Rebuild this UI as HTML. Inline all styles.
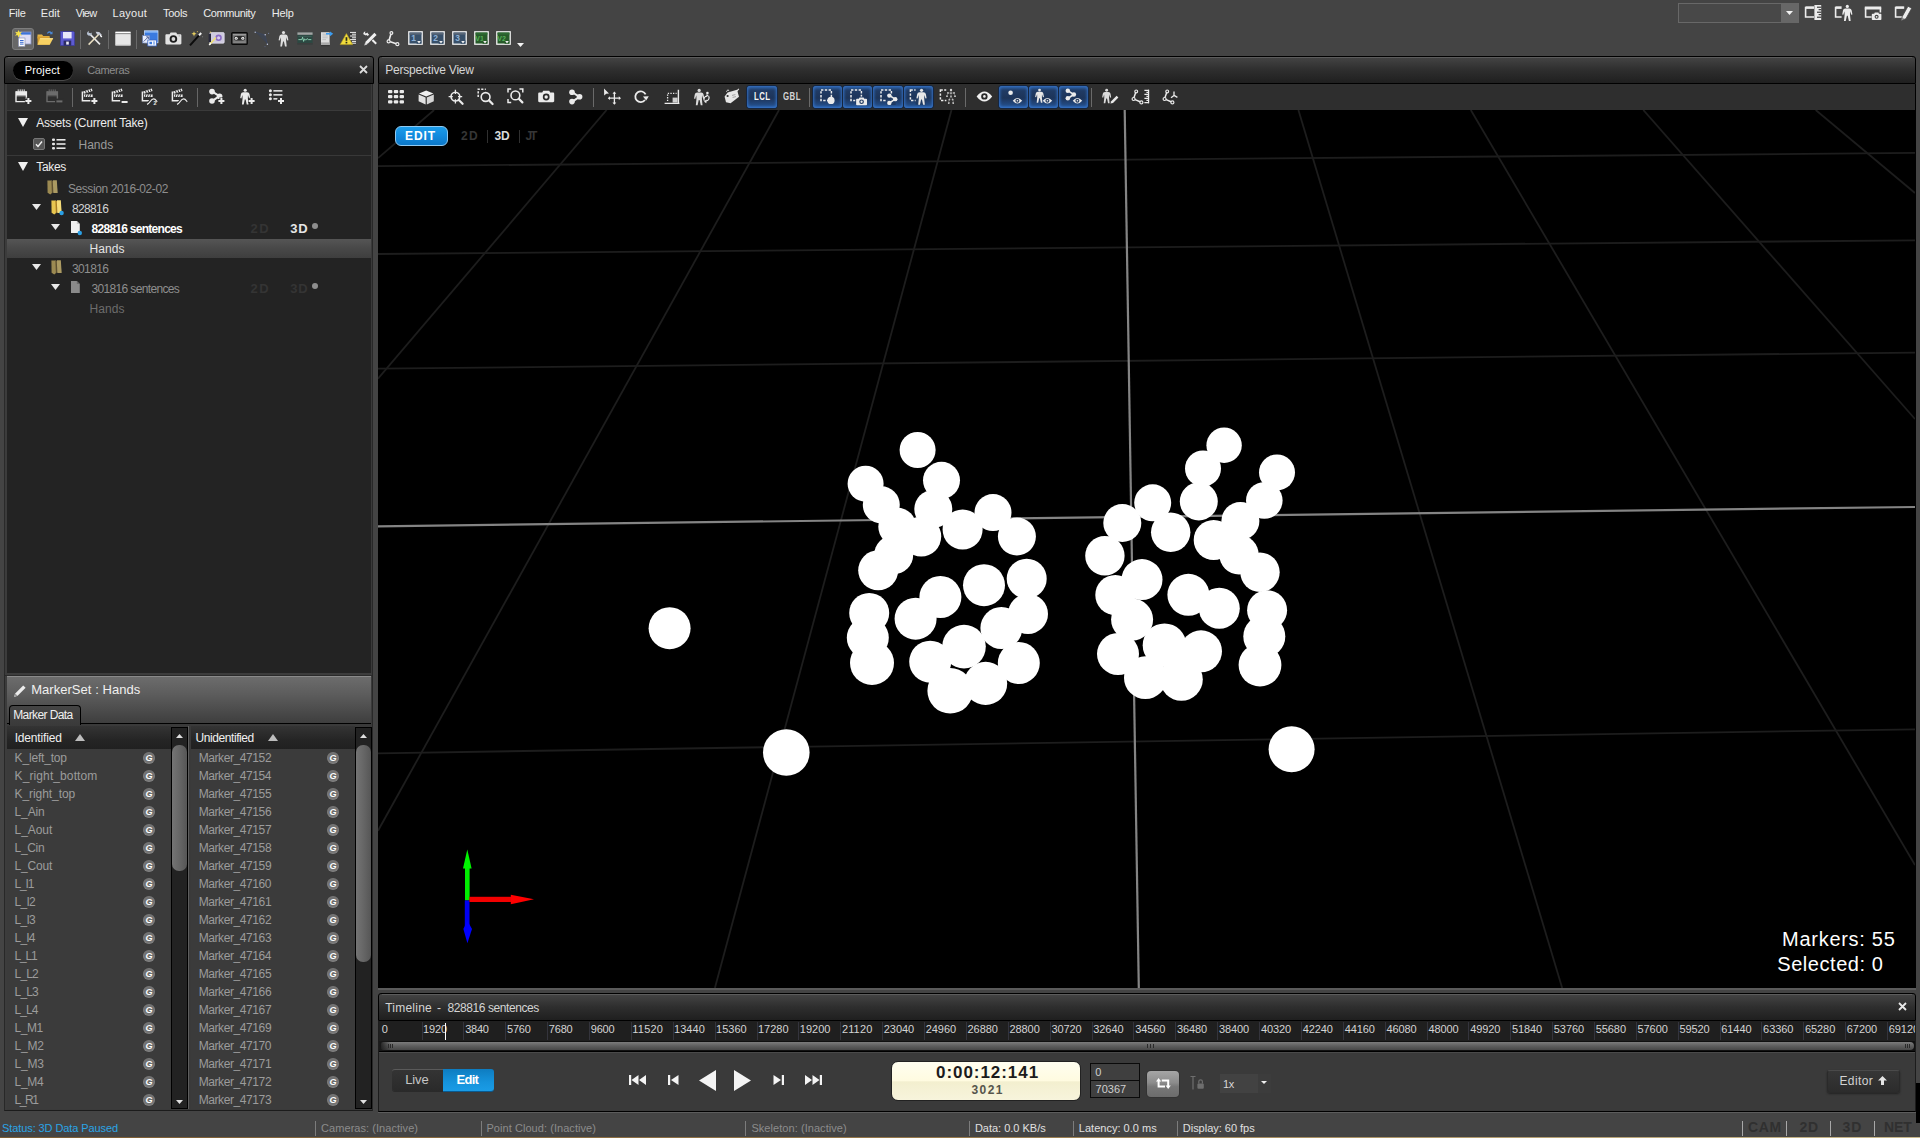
<!DOCTYPE html>
<html>
<head>
<meta charset="utf-8">
<title>Motive</title>
<style>
*{box-sizing:border-box;margin:0;padding:0}
html,body{width:1920px;height:1138px;overflow:hidden;background:#444444}
body{font-family:"Liberation Sans",sans-serif;font-size:12px;color:#e4e4e4;position:relative}
.abs{position:absolute}
.t{position:absolute;white-space:nowrap;line-height:14px}
/* menu */
/* panels */
.phead{position:absolute;height:28px;background:linear-gradient(#444 0,#434343 3%,#2e2e2e 50%,#1f1f1f 100%);border:1px solid #000;border-radius:3px 3px 0 0}
.phead:before{content:"";position:absolute;left:3px;right:3px;top:0;height:1px;background:#5c5c5c}
.vsep{position:absolute;width:1px;background:#6a6a6a}
svg{position:absolute;overflow:visible}
/* lists */
.row{position:absolute;left:0;right:0;height:18px}
.row .n{position:absolute;left:8px;top:2px;font-size:12px;line-height:14px;color:#9a9a9a;white-space:nowrap}
.g{position:absolute;width:12px;height:12px;border-radius:50%;background:radial-gradient(circle at 50% 45%,#6c6c6c 0,#727272 50%,#868686 75%,#6a6a6a 100%)}
.g:after{content:"G";position:absolute;left:0;top:0;width:12px;height:12px;font-size:9px;font-weight:bold;line-height:12px;text-align:center;color:#fff}
</style>
</head>
<body>

<!-- ======= MENU BAR ======= -->
<div id="menubar" class="abs" style="left:0;top:0;width:1920px;height:27px">
  <span class="t" style="left:8.7px;top:3.0px;font-size:11px;line-height:20px;color:#ececec;letter-spacing:-0.22px;">File</span>
  <span class="t" style="left:40.8px;top:3.0px;font-size:11px;line-height:20px;color:#ececec;letter-spacing:0.03px;">Edit</span>
  <span class="t" style="left:75.8px;top:3.0px;font-size:11px;line-height:20px;color:#ececec;letter-spacing:-0.77px;">View</span>
  <span class="t" style="left:112.6px;top:3.0px;font-size:11px;line-height:20px;color:#ececec;letter-spacing:0.25px;">Layout</span>
  <span class="t" style="left:162.9px;top:3.0px;font-size:11px;line-height:20px;color:#ececec;letter-spacing:-0.24px;">Tools</span>
  <span class="t" style="left:203.2px;top:3.0px;font-size:11px;line-height:20px;color:#ececec;letter-spacing:-0.38px;">Community</span>
  <span class="t" style="left:271.8px;top:3.0px;font-size:11px;line-height:20px;color:#ececec;letter-spacing:-0.22px;">Help</span>
</div>

<!-- ======= MAIN TOOLBAR ======= -->
<div id="maintb" class="abs" style="left:0;top:27px;width:700px;height:26px">
<!--MAINTB_S-->
<div class="abs" style="left:12px;top:1px;width:22px;height:22px;border-radius:3px;background:#676767;border:1px solid #7d7d7d"></div>
<svg style="left:15.0px;top:3.0px" width="17" height="17" viewBox="0 0 17 17"><rect x="4" y="2" width="12" height="12" fill="#dcdcf4"/><rect x="4" y="2" width="12" height="2.6" fill="#3c74d8"/><rect x="4" y="2" width="12" height="12" fill="none" stroke="#8a96c8" stroke-width="0.8"/><path d="M3.5 0l1 2.3 2.5-0.6-1.6 2 1.6 2-2.5-0.6-1 2.3-1-2.3-2.5 0.6 1.6-2-1.6-2 2.5 0.6z" fill="#f4e04a"/><rect x="3.5" y="8" width="6.5" height="8.5" fill="#fdfdfd" stroke="#8088a8" stroke-width="0.6"/><path d="M5 10.5h3.6M5 12.3h3.6M5 14.1h3.6" stroke="#3a6ad0" stroke-width="1"/></svg>
<svg style="left:36.0px;top:3.0px" width="18" height="16" viewBox="0 0 18 16"><path d="M11 3.2c1-2 3.2-2.4 4.6-1l0.9-0.9v3h-3l1-1c-0.8-0.8-2-0.6-2.6 0.5z" fill="#4a88d8"/><path d="M1.5 4.5h4.5l1.2 1.6h6.3v2.4h-12z" fill="#e6b546"/><path d="M1.5 6.5h12v8.2h-12z" fill="#d9a030"/><path d="M4.2 8.3h13l-3.4 6.4h-12.3z" fill="#f7d162"/><path d="M4.2 8.3h13l-0.5 1h-13z" fill="#fbe38e"/></svg>
<svg style="left:60.0px;top:4.0px" width="15" height="15" viewBox="0 0 15 15"><path d="M0.5 0.5h13l1 1v13h-14z" fill="#5d5bd0"/><path d="M0.5 0.5h13l1 1v13h-14z" fill="none" stroke="#3d3c9a" stroke-width="0.8"/><rect x="3" y="1" width="8.6" height="6.4" fill="#e8e8fa"/><rect x="3.6" y="9.6" width="7.6" height="5" fill="#2c2c64"/><rect x="6.2" y="10.6" width="2.6" height="3" fill="#eaeaf6"/></svg>
<div class="abs" style="left:80px;top:3px;width:1px;height:19px;background:#6a6a6a"></div>
<svg style="left:86.0px;top:4.0px" width="17" height="15" viewBox="0 0 17 15"><path d="M3.2 2.4L14 13.4" stroke="#e8e8e8" stroke-width="1.6"/><path d="M13.4 2.8L2.6 13.6" stroke="#e9dfc2" stroke-width="1.5"/><path d="M1 2.6c0-1.2 0.8-2.2 2-2.4l-0.4 1.9 1.6 0.7 1.3-1.4c0.6 1.2 0 2.8-1.4 3.2-1.6 0.4-3.1-0.6-3.1-2z" fill="#b9c4d6"/><path d="M9.6 0.8l3.6 0.2 2.6 2.8-1.2 1.3-1.6-1.6-1.8 0.2z" fill="#c8ccd8"/><path d="M14.2 4.2l1.6 1.8" stroke="#fff" stroke-width="1.4"/></svg>
<div class="abs" style="left:108px;top:3px;width:1px;height:19px;background:#6a6a6a"></div>
<svg style="left:115.0px;top:4.0px" width="16" height="15" viewBox="0 0 16 15"><rect x="0.5" y="0.8" width="15" height="13.6" fill="#e4e4e4"/><rect x="0.5" y="0.8" width="15" height="1.6" fill="#fff"/><rect x="0.5" y="2.4" width="15" height="0.9" fill="#555"/><rect x="0.5" y="3.3" width="15" height="11" fill="#e6e6e6"/><rect x="0.5" y="13.6" width="15" height="0.8" fill="#c8c8c8"/></svg>
<div class="abs" style="left:136px;top:3px;width:1px;height:19px;background:#6a6a6a"></div>
<svg style="left:142.0px;top:3.0px" width="17" height="17" viewBox="0 0 17 17"><rect x="2.4" y="0.8" width="13.6" height="12" fill="#3a7ae0"/><rect x="2.4" y="0.8" width="13.6" height="2" fill="#7fb0f4"/><rect x="2.4" y="0.8" width="13.6" height="12" fill="none" stroke="#cfe0fa" stroke-width="0.7"/><rect x="0.6" y="5.6" width="7" height="7.4" fill="#e8eefc" stroke="#6a80b8" stroke-width="0.6"/><path d="M1.6 11.6l4.6-4.6M6.4 9V6.8H4.2" stroke="#4a5a94" stroke-width="0.9" fill="none"/><rect x="5.8" y="10" width="8.6" height="6" fill="#f2f6ff" stroke="#3a66c4" stroke-width="0.8"/><rect x="7.4" y="11.8" width="2.6" height="2.4" fill="#3a7ae0"/><rect x="11.2" y="11.6" width="1.6" height="1" fill="#3a7ae0"/><rect x="11.2" y="13.4" width="1.6" height="1" fill="#3a7ae0"/></svg>
<svg style="left:165.0px;top:4.0px" width="17" height="15" viewBox="0 0 17 15"><path d="M1.6 3.2h3l1-1.8h5.6l1 1.8h3c0.7 0 1.2 0.5 1.2 1.2v7.8c0 0.7-0.5 1.2-1.2 1.2h-13.6c-0.7 0-1.2-0.5-1.2-1.2v-7.8c0-0.7 0.5-1.2 1.2-1.2z" fill="#e2e2e2"/><circle cx="8.4" cy="8" r="3.8" fill="#1c1c1c"/><circle cx="8.4" cy="8" r="1.9" fill="#d8d8d8"/><rect x="13.6" y="4.4" width="1.4" height="1" fill="#aaa"/></svg>
<svg style="left:187.0px;top:3.0px" width="17" height="17" viewBox="0 0 17 17"><path d="M3 15.4L12 5.4" stroke="#0c0c0c" stroke-width="2"/><path d="M12 5.4l2.2-2.4" stroke="#f4f4f4" stroke-width="2"/><path d="M7 1.2l0.7 1.9 1.9 0.7-1.9 0.7-0.7 1.9-0.7-1.9-1.9-0.7 1.9-0.7z" fill="#e8d060"/><circle cx="10.4" cy="1.6" r="0.6" fill="#c8b050"/><circle cx="15.6" cy="6.8" r="0.5" fill="#888"/></svg>
<svg style="left:208.0px;top:4.0px" width="17" height="15" viewBox="0 0 17 15"><rect x="1.6" y="1.6" width="14.6" height="10.6" rx="1" fill="#cfcbdf"/><rect x="1.6" y="1.6" width="14.6" height="10.6" rx="1" fill="none" stroke="#e6e4f0" stroke-width="0.7"/><rect x="0.6" y="2.6" width="2.4" height="8.6" fill="#28283a"/><circle cx="10.6" cy="6.8" r="3.2" fill="#8a6cc4"/><circle cx="10.6" cy="6.8" r="1.6" fill="#d8ccf0"/><path d="M1.6 13.6L8 6.6" stroke="#f0e070" stroke-width="1.5"/><path d="M1.2 14l1.6-1.7" stroke="#fff" stroke-width="1.5"/><path d="M2.4 0.6l0.5 1.2" stroke="#e8d060" stroke-width="1"/></svg>
<svg style="left:231.0px;top:5.0px" width="17" height="13" viewBox="0 0 17 13"><rect x="0.8" y="0.8" width="15.4" height="11.4" rx="0.8" fill="#767676" stroke="#0a0a0a" stroke-width="1.4"/><rect x="2" y="2" width="13" height="1.2" fill="#999"/><rect x="3" y="4" width="11" height="4.4" rx="2" fill="#2a2a2a"/><circle cx="5.2" cy="6.2" r="1.5" fill="#f0f0f0"/><circle cx="11.8" cy="6.2" r="1.5" fill="#f0f0f0"/><circle cx="5.2" cy="6.2" r="0.5" fill="#333"/><circle cx="11.8" cy="6.2" r="0.5" fill="#333"/><rect x="2.4" y="9.6" width="12.2" height="1" fill="#8c8c8c"/></svg>
<svg style="left:253.0px;top:3.0px" width="18" height="18" viewBox="0 0 18 18"><path d="M2 2l10 3 3 9.6z" fill="#38435c" opacity="0.5"/><path d="M2 2l10 3 2.4 9.6" stroke="#3a486a" stroke-width="0.8" fill="none" opacity="0.7"/><circle cx="2.2" cy="2.2" r="0.7" fill="#b8c0d8"/><circle cx="12.2" cy="4.8" r="0.7" fill="#d0d4e8"/><circle cx="14.4" cy="14.2" r="0.7" fill="#c8cce0"/><circle cx="15.6" cy="3.4" r="0.6" fill="#6a7490"/><circle cx="12" cy="16.6" r="0.6" fill="#56607c"/></svg>
<svg style="left:277.5px;top:4.0px" width="11" height="16" viewBox="0 0 11 16"><g fill="#dedede"><circle cx="5.5" cy="1.6" r="1.55"/><path d="M3.6 3.5h3.8q2 0.1 2.3 1.9l0.7 3.9-1.1 0.3-1.1-3.4-0.1 3.6 0.6 5.8h-1.7l-1.1-5h-0.8l-1.1 5h-1.7l0.6-5.8-0.1-3.6-1.1 3.4-1.1-0.3 0.7-3.9q0.3-1.8 2.3-1.9z"/></g></svg>
<svg style="left:297.0px;top:5.0px" width="16" height="13" viewBox="0 0 16 13"><rect x="0.4" y="0.4" width="15.2" height="12" fill="#2c4842"/><rect x="0.4" y="0.4" width="15.2" height="2.4" fill="#a4a4a4"/><rect x="0.4" y="11" width="15.2" height="1.4" fill="#3c3c3c"/><path d="M1.4 7.6h3.4l0.8-2.4 1 4.2 0.9-2.6 1.2 1.4 1.4-1.6 1.4 1h2.8" stroke="#8fd8b8" stroke-width="0.9" fill="none"/><path d="M1.4 4.4h13.2" stroke="#456a62" stroke-width="0.6"/></svg>
<svg style="left:320.0px;top:4.0px" width="15" height="16" viewBox="0 0 15 16"><path d="M1 1.2h8.6v12.8h-8.6z" fill="#dedede"/><path d="M1 11.4h8.6v2.6h-8.6z" fill="#aaa"/><path d="M2.4 3.2h5.4M2.4 5h5.4M2.4 6.8h5.4M2.4 8.6h3.6" stroke="#bcbcbc" stroke-width="0.9"/><path d="M6 2.8h4.6" stroke="#3c9cf0" stroke-width="1.6"/><path d="M10 0.4l3.2 2.4-3.2 2.4z" fill="#3c9cf0"/><rect x="1" y="14.2" width="8.6" height="1" fill="#333"/></svg>
<svg style="left:340.0px;top:4.0px" width="17" height="15" viewBox="0 0 17 15"><rect x="9" y="0.6" width="7" height="13" fill="#3c3c3c"/><path d="M10 1.4h6M12 3.2h4M10 5h6M12 6.8h4M10 8.6h6M12 10.4h4M10 12.2h6" stroke="#f2f2f2" stroke-width="1"/><path d="M6.4 2.6l6.2 11h-12.4z" fill="#f0dc3c"/><path d="M6.4 2.6l6.2 11h-12.4z" fill="none" stroke="#b8a020" stroke-width="0.6"/><rect x="5.6" y="6.2" width="1.7" height="3.6" fill="#2a2a1a"/><rect x="5.6" y="10.8" width="1.7" height="1.6" fill="#2a2a1a"/></svg>
<svg style="left:362.0px;top:4.0px" width="17" height="16" viewBox="0 0 17 16"><path d="M3 13.4l0.8-3 8.6-8.6 2.2 2.2-8.6 8.6z" fill="#f0f0f0"/><path d="M2.2 14.4l1-3.2 2.2 2.2z" fill="#d0d0d0"/><path d="M6.4 4.4l-2-2" stroke="#eee" stroke-width="2"/><path d="M1.4 3.2c-0.4-1.4 0.6-2.6 2-2.8l-0.4 1.6 1.2 0.8 1.3-1.2c0.4 1.2-0.2 2.6-1.6 3z" fill="#eee"/><path d="M10.4 9l3.8 3.8" stroke="#eee" stroke-width="2"/></svg>
<svg style="left:386.0px;top:4.0px" width="15" height="16" viewBox="0 0 15 16"><path d="M5 2.8L3 9.4M3.6 10.6l6.6 2.2" stroke="#ececec" stroke-width="1.6" fill="none"/><circle cx="5.4" cy="2" r="1.4" fill="#444" stroke="#ececec" stroke-width="1.2"/><circle cx="2.6" cy="10.4" r="1.5" fill="#444" stroke="#ececec" stroke-width="1.2"/><circle cx="11.4" cy="13.2" r="1.5" fill="#444" stroke="#ececec" stroke-width="1.2"/></svg>
<svg style="left:408.0px;top:4.0px" width="15" height="15" viewBox="0 0 15 15"><rect x="0.8" y="0.8" width="13.4" height="12.4" fill="#38506a" stroke="#f4f4f4" stroke-width="1.3"/><rect x="1.6" y="1.6" width="11.8" height="2" fill="#5a6878"/><text x="5.6" y="9.8" font-family="Liberation Sans" font-weight="bold" font-size="8.5" fill="#8fb0d6" text-anchor="middle">1</text><rect x="8.6" y="9.4" width="4.8" height="3.4" fill="#38506a"/><path d="M9.2 10l3.6 0-1.8 2.4z" fill="#f0f0f0"/></svg>
<svg style="left:430.0px;top:4.0px" width="15" height="15" viewBox="0 0 15 15"><rect x="0.8" y="0.8" width="13.4" height="12.4" fill="#38506a" stroke="#f4f4f4" stroke-width="1.3"/><rect x="1.6" y="1.6" width="11.8" height="2" fill="#5a6878"/><text x="5.6" y="9.8" font-family="Liberation Sans" font-weight="bold" font-size="8.5" fill="#8fb0d6" text-anchor="middle">2</text><rect x="8.6" y="9.4" width="4.8" height="3.4" fill="#38506a"/><path d="M9.2 10l3.6 0-1.8 2.4z" fill="#f0f0f0"/></svg>
<svg style="left:452.0px;top:4.0px" width="15" height="15" viewBox="0 0 15 15"><rect x="0.8" y="0.8" width="13.4" height="12.4" fill="#38506a" stroke="#f4f4f4" stroke-width="1.3"/><rect x="1.6" y="1.6" width="11.8" height="2" fill="#5a6878"/><text x="5.6" y="9.8" font-family="Liberation Sans" font-weight="bold" font-size="8.5" fill="#8fb0d6" text-anchor="middle">3</text><rect x="8.6" y="9.4" width="4.8" height="3.4" fill="#38506a"/><path d="M9.2 10l3.6 0-1.8 2.4z" fill="#f0f0f0"/></svg>
<svg style="left:474.0px;top:4.0px" width="15" height="15" viewBox="0 0 15 15"><rect x="0.8" y="0.8" width="13.4" height="12.4" fill="#275a2a" stroke="#f4f4f4" stroke-width="1.3"/><rect x="1.6" y="1.6" width="11.8" height="2" fill="#2e6a32"/><text x="5.6" y="9.8" font-family="Liberation Sans" font-weight="bold" font-size="7.0" fill="#58b058" text-anchor="middle">V1</text><rect x="8.6" y="9.4" width="4.8" height="3.4" fill="#275a2a"/><path d="M9.2 10l3.6 0-1.8 2.4z" fill="#f0f0f0"/></svg>
<svg style="left:496.0px;top:4.0px" width="15" height="15" viewBox="0 0 15 15"><rect x="0.8" y="0.8" width="13.4" height="12.4" fill="#275a2a" stroke="#f4f4f4" stroke-width="1.3"/><rect x="1.6" y="1.6" width="11.8" height="2" fill="#2e6a32"/><text x="5.6" y="9.8" font-family="Liberation Sans" font-weight="bold" font-size="7.0" fill="#58b058" text-anchor="middle">V2</text><rect x="8.6" y="9.4" width="4.8" height="3.4" fill="#275a2a"/><path d="M9.2 10l3.6 0-1.8 2.4z" fill="#f0f0f0"/></svg>
<svg style="left:517.0px;top:15.5px" width="7" height="4" viewBox="0 0 7 4"><path d="M0 0h7l-3.5 4z" fill="#f4f4f4"/></svg>
<!--MAINTB_E-->
</div>

<!-- ======= TOP RIGHT ======= -->
<div id="topright" class="abs" style="left:1670px;top:0;width:250px;height:27px">
<!--TOPRIGHT_S-->
<div class="abs" style="left:8px;top:3px;width:121px;height:20px;background:#484848;border:1px solid #686868"></div>
<div class="abs" style="left:111px;top:3px;width:17px;height:20px;background:#676767"></div>
<svg style="left:116.0px;top:11.0px" width="7" height="4" viewBox="0 0 7 4"><path d="M0 0h7l-3.5 4z" fill="#f2f2f2"/></svg>
<svg style="left:134.0px;top:4.0px" width="18" height="17" viewBox="0 0 18 17"><path d="M10 3.6h-8.4v9.4h8.4" fill="none" stroke="#ececec" stroke-width="1.6"/><path d="M1.6 3.6h8.4" stroke="#ececec" stroke-width="2.4"/><rect x="10.4" y="1" width="6.8" height="15" fill="#ececec"/><path d="M13 3.2h4.2M14.6 5.7h2.6M13 8.2h4.2M14.6 10.7h2.6M13 13.2h4.2" stroke="#1a1a1a" stroke-width="1"/></svg>
<svg style="left:164.0px;top:4.0px" width="18" height="17" viewBox="0 0 18 17"><path d="M9 3.6h-7.4v9.4h7" fill="none" stroke="#ececec" stroke-width="1.6"/><path d="M1.6 3.6h7.4" stroke="#ececec" stroke-width="2.4"/><rect x="7.6" y="0.6" width="10" height="16.4" fill="#444"/><g transform="translate(7.6,0.8) scale(1.04)" fill="#ececec"><circle cx="5.5" cy="1.6" r="1.55"/><path d="M3.6 3.5h3.8q2 0.1 2.3 1.9l0.7 3.9-1.1 0.3-1.1-3.4-0.1 3.6 0.6 5.8h-1.7l-1.1-5h-0.8l-1.1 5h-1.7l0.6-5.8-0.1-3.6-1.1 3.4-1.1-0.3 0.7-3.9q0.3-1.8 2.3-1.9z"/></g></svg>
<svg style="left:194.0px;top:4.0px" width="18" height="17" viewBox="0 0 18 17"><path d="M1.6 3.6v9.4h6M16.4 3.6v5" fill="none" stroke="#ececec" stroke-width="1.6"/><path d="M0.8 4h16.4" stroke="#ececec" stroke-width="3"/><path d="M8.6 9.8h1.6l0.6-1.2h3.6l0.6 1.2h1.6c0.4 0 0.8 0.4 0.8 0.8v4.6c0 0.4-0.4 0.8-0.8 0.8h-8c-0.4 0-0.8-0.4-0.8-0.8v-4.6c0-0.4 0.4-0.8 0.8-0.8z" fill="#ececec"/><circle cx="12.6" cy="12.8" r="2" fill="#444"/><circle cx="12.6" cy="12.8" r="0.9" fill="#ececec"/></svg>
<svg style="left:224.0px;top:4.0px" width="18" height="17" viewBox="0 0 18 17"><path d="M9.6 3.6h-8v9.4h6.6" fill="none" stroke="#ececec" stroke-width="1.6"/><path d="M1.6 3.6h8.6" stroke="#ececec" stroke-width="2.4"/><path d="M7.4 16.4l0.8-3.8 5.8-10.4 3.7 2.1-5.8 10.4z" fill="#ececec" stroke="#444" stroke-width="0.8"/><path d="M7.4 16.4l0.6-2.9 2.2 1.2z" fill="#8a8a8a"/></svg>
<!--TOPRIGHT_E-->
</div>

<!-- ======= LEFT PANEL : PROJECT ======= -->
<div id="project" class="abs" style="left:4px;top:56px;width:370px;height:618px">
<!--PROJECT_S-->
<div class="phead" style="left:0;top:0;width:370px"></div>
<div class="abs" style="left:9px;top:5px;width:60px;height:19px;border-radius:10px;background:#000;box-shadow:0 1px 0 #4a4a4a"></div>
<span class="t" style="left:20.8px;top:3.8px;font-size:11px;line-height:20px;color:#fff;letter-spacing:0.13px;">Project</span>
<span class="t" style="left:83.2px;top:3.8px;font-size:11px;line-height:20px;color:#8c8c8c;letter-spacing:-0.36px;">Cameras</span>
<svg style="left:355px;top:9px" width="9" height="9" viewBox="0 0 9 9"><path d="M1 1l7 7M8 1l-7 7" stroke="#dcdcdc" stroke-width="1.8"/></svg>
<div class="abs" style="left:0;top:28px;width:369px;height:26px;background:#2e2e2e"></div>
<div class="abs" style="left:0;top:28px;width:3px;height:590px;background:#3c3c3c;border-left:1px solid #2a2a2a"></div>
<div class="abs" style="left:367px;top:28px;width:2px;height:590px;background:#3a3a3a;border-right:1px solid #282828"></div>
<div id="projtb" class="abs" style="left:0;top:28px;width:370px;height:26px">
<!--PROJTB_S-->
<svg style="left:11.0px;top:5.0px" width="18" height="16" viewBox="0 0 18 16"><path d="M1 2.2h10.4v4h-10.4z" fill="#ebebeb"/><path d="M1 2.2v10.4h10.4V2.2" fill="none" stroke="#ebebeb" stroke-width="1.4"/><path d="M3.2 0.4v2.6M5.2 0.4v2.6M7.2 0.4v2.6M9.2 0.4v2.6" stroke="#ebebeb" stroke-width="1"/><path d="M1 6.8h10.4" stroke="#ebebeb" stroke-width="0.8"/><path d="M9.9 12.0h7M13.4 8.5v7" stroke="#2e2e2e" stroke-width="4" /><path d="M10.4 12.0h6M13.4 9.0v6" stroke="#ebebeb" stroke-width="2"/></svg>
<svg style="left:42.0px;top:5.0px" width="18" height="16" viewBox="0 0 18 16"><path d="M1 2.2h10.4v4h-10.4z" fill="#6c6c6c"/><path d="M1 2.2v10.4h10.4V2.2" fill="none" stroke="#6c6c6c" stroke-width="1.4"/><path d="M3.2 0.4v2.6M5.2 0.4v2.6M7.2 0.4v2.6M9.2 0.4v2.6" stroke="#6c6c6c" stroke-width="1"/><path d="M1 6.8h10.4" stroke="#6c6c6c" stroke-width="0.8"/><rect x="9" y="9.6" width="9" height="5" fill="#2e2e2e"/><path d="M10.4 12.4h6" stroke="#6c6c6c" stroke-width="2"/></svg>
<div class="abs" style="left:68px;top:4px;width:1px;height:19px;background:#666"></div>
<svg style="left:77.0px;top:4.0px" width="18" height="17" viewBox="0 0 18 17"><path d="M1.4 3.6v9.2h8" fill="none" stroke="#ebebeb" stroke-width="1.5"/><path d="M2.2 3.4l8.6-2.8 0.8 2.4-8.6 2.8z" fill="#ebebeb"/><path d="M4.4 2.6l1 2.6M6.8 1.8l1 2.6M9 1.2l1 2.4" stroke="#2e2e2e" stroke-width="1"/><path d="M3 6.4h8.6v2.6h-8.6z" fill="#ebebeb"/><path d="M5 6.2l-1 3M7.4 6.2l-1 3M9.8 6.2l-1 3" stroke="#2e2e2e" stroke-width="0.9"/><path d="M9.9 13.0h7M13.4 9.5v7" stroke="#2e2e2e" stroke-width="4" /><path d="M10.4 13.0h6M13.4 10.0v6" stroke="#ebebeb" stroke-width="2"/></svg>
<svg style="left:107.0px;top:4.0px" width="18" height="17" viewBox="0 0 18 17"><path d="M1.4 3.6v9.2h8" fill="none" stroke="#ebebeb" stroke-width="1.5"/><path d="M2.2 3.4l8.6-2.8 0.8 2.4-8.6 2.8z" fill="#ebebeb"/><path d="M4.4 2.6l1 2.6M6.8 1.8l1 2.6M9 1.2l1 2.4" stroke="#2e2e2e" stroke-width="1"/><path d="M3 6.4h8.6v2.6h-8.6z" fill="#ebebeb"/><path d="M5 6.2l-1 3M7.4 6.2l-1 3M9.8 6.2l-1 3" stroke="#2e2e2e" stroke-width="0.9"/><rect x="9.4" y="11" width="8" height="5" fill="#2e2e2e"/><path d="M10.6 14.0h6" stroke="#ebebeb" stroke-width="2"/></svg>
<svg style="left:137.0px;top:4.0px" width="19" height="17" viewBox="0 0 19 17"><path d="M1.4 3.6v9.2h8" fill="none" stroke="#ebebeb" stroke-width="1.5"/><path d="M2.2 3.4l8.6-2.8 0.8 2.4-8.6 2.8z" fill="#ebebeb"/><path d="M4.4 2.6l1 2.6M6.8 1.8l1 2.6M9 1.2l1 2.4" stroke="#2e2e2e" stroke-width="1"/><path d="M3 6.4h8.6v2.6h-8.6z" fill="#ebebeb"/><path d="M5 6.2l-1 3M7.4 6.2l-1 3M9.8 6.2l-1 3" stroke="#2e2e2e" stroke-width="0.9"/><path d="M6 16.4c3-0.6 3.6-5.6 6.6-5.6 1.8 0 2.4 1.4 3.6 3" fill="none" stroke="#2e2e2e" stroke-width="3.4"/><path d="M6 16.4c3-0.6 3.6-5.6 6.6-5.6 1.8 0 2.4 1.4 3.6 3" fill="none" stroke="#ebebeb" stroke-width="1.2"/><text x="12.6" y="17" font-family="Liberation Sans" font-size="5.5" font-weight="bold" fill="#ebebeb">2</text></svg>
<svg style="left:167.0px;top:4.0px" width="19" height="17" viewBox="0 0 19 17"><path d="M1.4 3.6v9.2h8" fill="none" stroke="#ebebeb" stroke-width="1.5"/><path d="M2.2 3.4l8.6-2.8 0.8 2.4-8.6 2.8z" fill="#ebebeb"/><path d="M4.4 2.6l1 2.6M6.8 1.8l1 2.6M9 1.2l1 2.4" stroke="#2e2e2e" stroke-width="1"/><path d="M3 6.4h8.6v2.6h-8.6z" fill="#ebebeb"/><path d="M5 6.2l-1 3M7.4 6.2l-1 3M9.8 6.2l-1 3" stroke="#2e2e2e" stroke-width="0.9"/><path d="M6 16.4c3-0.6 3.6-5.6 6.6-5.6 1.8 0 2.4 1.4 3.6 3" fill="none" stroke="#2e2e2e" stroke-width="3.4"/><path d="M6 16.4c3-0.6 3.6-5.6 6.6-5.6 1.8 0 2.4 1.4 3.6 3" fill="none" stroke="#ebebeb" stroke-width="1.2"/></svg>
<div class="abs" style="left:193px;top:4px;width:1px;height:19px;background:#666"></div>
<svg style="left:204.0px;top:4.0px" width="18" height="17" viewBox="0 0 18 17"><g transform="translate(1.0,0.8) scale(1.00)"><path d="M3 2.6L10.4 7.4M3 12.4L10.4 7.4" stroke="#ebebeb" stroke-width="2"/><circle cx="3" cy="2.8" r="2.8" fill="#ebebeb"/><circle cx="10.6" cy="7.4" r="2.8" fill="#ebebeb"/><circle cx="3" cy="12.2" r="2.8" fill="#ebebeb"/></g><path d="M9.9 13.0h7M13.4 9.5v7" stroke="#2e2e2e" stroke-width="4" /><path d="M10.4 13.0h6M13.4 10.0v6" stroke="#ebebeb" stroke-width="2"/></svg>
<svg style="left:235.0px;top:4.0px" width="18" height="17" viewBox="0 0 18 17"><g transform="translate(0.6,0.6) scale(1.02)" fill="#ebebeb"><circle cx="5.5" cy="1.6" r="1.55"/><path d="M3.6 3.5h3.8q2 0.1 2.3 1.9l0.7 3.9-1.1 0.3-1.1-3.4-0.1 3.6 0.6 5.8h-1.7l-1.1-5h-0.8l-1.1 5h-1.7l0.6-5.8-0.1-3.6-1.1 3.4-1.1-0.3 0.7-3.9q0.3-1.8 2.3-1.9z"/></g><path d="M9.1 13.0h7M12.6 9.5v7" stroke="#2e2e2e" stroke-width="4" /><path d="M9.6 13.0h6M12.6 10.0v6" stroke="#ebebeb" stroke-width="2"/></svg>
<svg style="left:264.0px;top:5.0px" width="18" height="16" viewBox="0 0 18 16"><g fill="#ebebeb"><circle cx="2.4" cy="1.8" r="1.5"/><circle cx="2.4" cy="5.8" r="1.5"/><circle cx="2.4" cy="9.8" r="1.5"/><rect x="5.4" y="1.1" width="9" height="1.5"/><rect x="5.4" y="5.1" width="9" height="1.5"/><rect x="5.4" y="9.1" width="4" height="1.5"/></g><path d="M9.5 12.0h7M13.0 8.5v7" stroke="#2e2e2e" stroke-width="4" /><path d="M10.0 12.0h6M13.0 9.0v6" stroke="#ebebeb" stroke-width="2"/></svg>
<!--PROJTB_E-->
</div>
<div class="abs" style="left:3px;top:54px;width:364px;height:563px;background:#232323"></div>
<div class="abs" style="left:3px;top:54px;width:364px;height:1px;background:#3a3a3a"></div>
<div class="abs" style="left:3px;top:99px;width:364px;height:1px;background:#383838"></div>
<svg style="left:14.0px;top:61.5px" width="10" height="9" viewBox="0 0 10 9"><path d="M0 0h10 l-5.0 9 z" fill="#f0f0f0"/></svg>
<span class="t" style="left:32.2px;top:56.8px;font-size:12px;line-height:20px;color:#ececec;letter-spacing:-0.21px;">Assets (Current Take)</span>
<div class="abs" style="left:29px;top:82px;width:12px;height:12px;border-radius:2px;background:#555;border:1px solid #777"></div>
<svg style="left:29px;top:82px" width="12" height="12" viewBox="0 0 12 12"><path d="M3 6.3l2 2.2 4-5" stroke="#f4f4f4" stroke-width="1.4" fill="none"/></svg>
<svg style="left:48px;top:82px" width="14" height="12" viewBox="0 0 14 12"><g fill="#e6e6e6"><rect x="0" y="0.5" width="3" height="2.6" rx="1"/><rect x="0" y="4.7" width="3" height="2.6" rx="1"/><rect x="0" y="8.9" width="3" height="2.6" rx="1"/><rect x="4.5" y="1" width="9" height="1.6"/><rect x="4.5" y="5.2" width="9" height="1.6"/><rect x="4.5" y="9.4" width="9" height="1.6"/></g></svg>
<span class="t" style="left:74.5px;top:79.0px;font-size:12px;line-height:20px;color:#9a9a9a;letter-spacing:-0.01px;">Hands</span>
<svg style="left:14.0px;top:105.5px" width="10" height="9" viewBox="0 0 10 9"><path d="M0 0h10 l-5.0 9 z" fill="#f0f0f0"/></svg>
<span class="t" style="left:32.2px;top:100.9px;font-size:12px;line-height:20px;color:#ececec;letter-spacing:-0.31px;">Takes</span>
<svg style="left:42.8px;top:123.6px" width="14" height="16" viewBox="0 0 14 16"><path d="M0.4 0.5h4.6l0.3 12.3-2 1.8-2.7-1.9z" fill="#9c8a52"/><path d="M4.4 0.9h1.6l0.6 10.4-1.7 2.2z" fill="#5e5030"/><path d="M5.8 0.3h4l0.9 12.6h-4.4z" fill="#ab9a62"/></svg>
<span class="t" style="left:63.9px;top:122.8px;font-size:12px;line-height:20px;color:#8e8e8e;letter-spacing:-0.41px;">Session 2016-02-02</span>
<svg style="left:27.5px;top:147.8px" width="9" height="6" viewBox="0 0 9 6"><path d="M0 0h9 l-4.5 6 z" fill="#e8e8e8"/></svg>
<svg style="left:46.6px;top:143.8px" width="14" height="16" viewBox="0 0 14 16"><path d="M0.4 0.5h4.6l0.3 12.3-2 1.8-2.7-1.9z" fill="#e8c650"/><path d="M4.4 0.9h1.6l0.6 10.4-1.7 2.2z" fill="#a87c22"/><path d="M5.8 0.3h4l0.9 12.6h-4.4z" fill="#f6dc78"/><circle cx="10.6" cy="13" r="2.2" fill="#2a9fe4"/></svg>
<span class="t" style="left:67.9px;top:142.7px;font-size:12px;line-height:20px;color:#d4d4d4;letter-spacing:-0.62px;">828816</span>
<svg style="left:47.4px;top:167.8px" width="9" height="6" viewBox="0 0 9 6"><path d="M0 0h9 l-4.5 6 z" fill="#e8e8e8"/></svg>
<svg style="left:67px;top:165px" width="13" height="15" viewBox="0 0 13 15"><path d="M0 0h5.8l3 3v9h-8.8z" fill="#f0f0f0"/><path d="M5.8 0v3h3z" fill="#c8c8c8"/><circle cx="8.8" cy="12" r="2.2" fill="#2a9fe4"/></svg>
<span class="t" style="left:87.6px;top:162.8px;font-size:12px;line-height:20px;color:#fff;letter-spacing:-0.73px;font-weight:bold;">828816 sentences</span>
<span class="t" style="left:246.6px;top:162.5px;font-size:13px;line-height:20px;color:#343434;letter-spacing:1.35px;font-weight:bold;">2D</span>
<span class="t" style="left:286.3px;top:162.5px;font-size:13px;line-height:20px;color:#e6e6e6;letter-spacing:0.80px;font-weight:bold;">3D</span>
<div class="abs" style="left:308px;top:167px;width:6px;height:6px;border-radius:50%;background:#8e8e8e"></div>
<div class="abs" style="left:3px;top:183px;width:364px;height:19px;background:linear-gradient(#555 0,#484848 50%,#3e3e3e 100%)"></div>
<span class="t" style="left:85.4px;top:182.7px;font-size:12px;line-height:20px;color:#e4e4e4;letter-spacing:0.11px;">Hands</span>
<svg style="left:27.5px;top:207.8px" width="9" height="6" viewBox="0 0 9 6"><path d="M0 0h9 l-4.5 6 z" fill="#e8e8e8"/></svg>
<svg style="left:46.6px;top:203.8px" width="14" height="16" viewBox="0 0 14 16"><path d="M0.4 0.5h4.6l0.3 12.3-2 1.8-2.7-1.9z" fill="#9c8a52"/><path d="M4.4 0.9h1.6l0.6 10.4-1.7 2.2z" fill="#5e5030"/><path d="M5.8 0.3h4l0.9 12.6h-4.4z" fill="#ab9a62"/></svg>
<span class="t" style="left:68.0px;top:202.6px;font-size:12px;line-height:20px;color:#8e8e8e;letter-spacing:-0.63px;">301816</span>
<svg style="left:47.4px;top:227.8px" width="9" height="6" viewBox="0 0 9 6"><path d="M0 0h9 l-4.5 6 z" fill="#e8e8e8"/></svg>
<svg style="left:67px;top:225px" width="13" height="15" viewBox="0 0 13 15"><path d="M0 0h5.8l3 3v9h-8.8z" fill="#8a8a8a"/><path d="M5.8 0v3h3z" fill="#6a6a6a"/></svg>
<span class="t" style="left:87.5px;top:222.8px;font-size:12px;line-height:20px;color:#8e8e8e;letter-spacing:-0.65px;">301816 sentences</span>
<span class="t" style="left:246.6px;top:222.5px;font-size:13px;line-height:20px;color:#343434;letter-spacing:1.35px;font-weight:bold;">2D</span>
<span class="t" style="left:286.3px;top:222.5px;font-size:13px;line-height:20px;color:#343434;letter-spacing:0.80px;font-weight:bold;">3D</span>
<div class="abs" style="left:308px;top:227px;width:6px;height:6px;border-radius:50%;background:#8e8e8e"></div>
<span class="t" style="left:85.4px;top:242.6px;font-size:12px;line-height:20px;color:#6c6c6c;letter-spacing:0.11px;">Hands</span>
<div class="abs" style="left:1px;top:617px;width:367px;height:1px;background:#3c3c3c"></div>
<!--PROJECT_E-->
</div>

<!-- ======= LEFT PANEL : MARKERSET ======= -->
<div id="markerset" class="abs" style="left:4px;top:674px;width:370px;height:437px">
<!--MARKERSET_S-->
<div class="abs" style="left:0;top:0;width:369px;height:437px;background:#3a3a3a;border:1px solid #282828;border-top:none;border-bottom-color:#1c1c1c"></div>
<div class="abs" style="left:1px;top:0;width:367px;height:1px;background:#3c3c3c"></div>
<div class="abs" style="left:1px;top:1px;width:367px;height:1px;background:#2a2a2a"></div>
<div class="abs" style="left:1px;top:2px;width:2px;height:434px;background:#3c3c3c"></div>
<div class="abs" style="left:3px;top:2px;width:364px;height:47px;background:linear-gradient(#8a8a8a 0,#8a8a8a 2.2%,#6c6c6c 2.3%,#5c5c5c 40%,#3e3e3e 100%)"></div>
<svg style="left:9px;top:10px" width="14" height="14" viewBox="0 0 14 14"><path d="M1 13l1.2-3.6 8-8 2.4 2.4-8 8z" fill="#ececec"/><path d="M1 13l1.2-3.6 2.4 2.4z" fill="#9a9a9a"/></svg>
<span class="t" style="left:27.2px;top:6.3px;font-size:13px;line-height:20px;color:#f0f0f0;letter-spacing:0.04px;">MarkerSet : Hands</span>
<div class="abs" style="left:3px;top:49px;width:364px;height:1px;background:#000"></div>
<div class="abs" style="left:5px;top:31px;width:72px;height:20px;border:1px solid #000;border-bottom:none;border-radius:4px 4px 0 0;background:linear-gradient(#454545,#3a3a3a)"></div>
<span class="t" style="left:9.2px;top:31.0px;font-size:12px;line-height:20px;color:#f0f0f0;letter-spacing:-0.60px;">Marker Data</span>
<div class="abs" style="left:3px;top:52px;width:164px;height:383px;overflow:hidden;background:#3b3b3b">
<div class="abs" style="left:0;top:0;width:164px;height:23px;background:linear-gradient(#343434,#252525 60%,#202020)"></div>
<span class="t" style="left:7.7px;top:1.7px;font-size:12px;line-height:20px;color:#f0f0f0;letter-spacing:-0.17px;">Identified</span>
<svg style="left:68px;top:8px" width="10" height="7" viewBox="0 0 10 7"><path d="M0 7h10l-5-7z" fill="#bdbdbd"/></svg>
<span class="t" style="left:7.6px;top:22.4px;font-size:12px;line-height:20px;color:#9c9c9c;letter-spacing:-0.18px;">K_left_top</span>
<i class="g" style="left:136px;top:26px"></i>
<span class="t" style="left:7.6px;top:40.4px;font-size:12px;line-height:20px;color:#9c9c9c;letter-spacing:0.10px;">K_right_bottom</span>
<i class="g" style="left:136px;top:44px"></i>
<span class="t" style="left:7.6px;top:58.4px;font-size:12px;line-height:20px;color:#9c9c9c;letter-spacing:-0.08px;">K_right_top</span>
<i class="g" style="left:136px;top:62px"></i>
<span class="t" style="left:7.6px;top:76.4px;font-size:12px;line-height:20px;color:#9c9c9c;letter-spacing:-0.15px;">L_Ain</span>
<i class="g" style="left:136px;top:80px"></i>
<span class="t" style="left:7.6px;top:94.4px;font-size:12px;line-height:20px;color:#9c9c9c;letter-spacing:-0.07px;">L_Aout</span>
<i class="g" style="left:136px;top:98px"></i>
<span class="t" style="left:7.6px;top:112.4px;font-size:12px;line-height:20px;color:#9c9c9c;letter-spacing:-0.33px;">L_Cin</span>
<i class="g" style="left:136px;top:116px"></i>
<span class="t" style="left:7.6px;top:130.4px;font-size:12px;line-height:20px;color:#9c9c9c;letter-spacing:-0.20px;">L_Cout</span>
<i class="g" style="left:136px;top:134px"></i>
<span class="t" style="left:7.6px;top:148.4px;font-size:12px;line-height:20px;color:#9c9c9c;letter-spacing:-1.17px;">L_I1</span>
<i class="g" style="left:136px;top:152px"></i>
<span class="t" style="left:7.6px;top:166.4px;font-size:12px;line-height:20px;color:#9c9c9c;letter-spacing:-0.77px;">L_I2</span>
<i class="g" style="left:136px;top:170px"></i>
<span class="t" style="left:7.6px;top:184.4px;font-size:12px;line-height:20px;color:#9c9c9c;letter-spacing:-0.78px;">L_I3</span>
<i class="g" style="left:136px;top:188px"></i>
<span class="t" style="left:7.6px;top:202.4px;font-size:12px;line-height:20px;color:#9c9c9c;letter-spacing:-0.85px;">L_I4</span>
<i class="g" style="left:136px;top:206px"></i>
<span class="t" style="left:7.6px;top:220.4px;font-size:12px;line-height:20px;color:#9c9c9c;letter-spacing:-1.17px;">L_L1</span>
<i class="g" style="left:136px;top:224px"></i>
<span class="t" style="left:7.6px;top:238.4px;font-size:12px;line-height:20px;color:#9c9c9c;letter-spacing:-0.87px;">L_L2</span>
<i class="g" style="left:136px;top:242px"></i>
<span class="t" style="left:7.6px;top:256.4px;font-size:12px;line-height:20px;color:#9c9c9c;letter-spacing:-0.88px;">L_L3</span>
<i class="g" style="left:136px;top:260px"></i>
<span class="t" style="left:7.6px;top:274.4px;font-size:12px;line-height:20px;color:#9c9c9c;letter-spacing:-0.95px;">L_L4</span>
<i class="g" style="left:136px;top:278px"></i>
<span class="t" style="left:7.6px;top:292.4px;font-size:12px;line-height:20px;color:#9c9c9c;letter-spacing:-0.52px;">L_M1</span>
<i class="g" style="left:136px;top:296px"></i>
<span class="t" style="left:7.6px;top:310.4px;font-size:12px;line-height:20px;color:#9c9c9c;letter-spacing:-0.25px;">L_M2</span>
<i class="g" style="left:136px;top:314px"></i>
<span class="t" style="left:7.6px;top:328.4px;font-size:12px;line-height:20px;color:#9c9c9c;letter-spacing:-0.27px;">L_M3</span>
<i class="g" style="left:136px;top:332px"></i>
<span class="t" style="left:7.6px;top:346.4px;font-size:12px;line-height:20px;color:#9c9c9c;letter-spacing:-0.33px;">L_M4</span>
<i class="g" style="left:136px;top:350px"></i>
<span class="t" style="left:7.6px;top:364.4px;font-size:12px;line-height:20px;color:#9c9c9c;letter-spacing:-1.47px;">L_R1</span>
<i class="g" style="left:136px;top:368px"></i>
</div>
<div class="abs" style="left:187px;top:52px;width:164px;height:383px;overflow:hidden;background:#3b3b3b">
<div class="abs" style="left:0;top:0;width:164px;height:23px;background:linear-gradient(#343434,#252525 60%,#202020)"></div>
<span class="t" style="left:4.6px;top:1.7px;font-size:12px;line-height:20px;color:#f0f0f0;letter-spacing:-0.43px;">Unidentified</span>
<svg style="left:77px;top:8px" width="10" height="7" viewBox="0 0 10 7"><path d="M0 7h10l-5-7z" fill="#bdbdbd"/></svg>
<span class="t" style="left:7.7px;top:22.4px;font-size:12px;line-height:20px;color:#9c9c9c;letter-spacing:-0.41px;">Marker_47152</span>
<i class="g" style="left:136px;top:26px"></i>
<span class="t" style="left:7.7px;top:40.4px;font-size:12px;line-height:20px;color:#9c9c9c;letter-spacing:-0.43px;">Marker_47154</span>
<i class="g" style="left:136px;top:44px"></i>
<span class="t" style="left:7.7px;top:58.4px;font-size:12px;line-height:20px;color:#9c9c9c;letter-spacing:-0.41px;">Marker_47155</span>
<i class="g" style="left:136px;top:62px"></i>
<span class="t" style="left:7.7px;top:76.4px;font-size:12px;line-height:20px;color:#9c9c9c;letter-spacing:-0.41px;">Marker_47156</span>
<i class="g" style="left:136px;top:80px"></i>
<span class="t" style="left:7.7px;top:94.4px;font-size:12px;line-height:20px;color:#9c9c9c;letter-spacing:-0.41px;">Marker_47157</span>
<i class="g" style="left:136px;top:98px"></i>
<span class="t" style="left:7.7px;top:112.4px;font-size:12px;line-height:20px;color:#9c9c9c;letter-spacing:-0.41px;">Marker_47158</span>
<i class="g" style="left:136px;top:116px"></i>
<span class="t" style="left:7.7px;top:130.4px;font-size:12px;line-height:20px;color:#9c9c9c;letter-spacing:-0.41px;">Marker_47159</span>
<i class="g" style="left:136px;top:134px"></i>
<span class="t" style="left:7.7px;top:148.4px;font-size:12px;line-height:20px;color:#9c9c9c;letter-spacing:-0.42px;">Marker_47160</span>
<i class="g" style="left:136px;top:152px"></i>
<span class="t" style="left:7.7px;top:166.4px;font-size:12px;line-height:20px;color:#9c9c9c;letter-spacing:-0.41px;">Marker_47161</span>
<i class="g" style="left:136px;top:170px"></i>
<span class="t" style="left:7.7px;top:184.4px;font-size:12px;line-height:20px;color:#9c9c9c;letter-spacing:-0.41px;">Marker_47162</span>
<i class="g" style="left:136px;top:188px"></i>
<span class="t" style="left:7.7px;top:202.4px;font-size:12px;line-height:20px;color:#9c9c9c;letter-spacing:-0.41px;">Marker_47163</span>
<i class="g" style="left:136px;top:206px"></i>
<span class="t" style="left:7.7px;top:220.4px;font-size:12px;line-height:20px;color:#9c9c9c;letter-spacing:-0.43px;">Marker_47164</span>
<i class="g" style="left:136px;top:224px"></i>
<span class="t" style="left:7.7px;top:238.4px;font-size:12px;line-height:20px;color:#9c9c9c;letter-spacing:-0.41px;">Marker_47165</span>
<i class="g" style="left:136px;top:242px"></i>
<span class="t" style="left:7.7px;top:256.4px;font-size:12px;line-height:20px;color:#9c9c9c;letter-spacing:-0.41px;">Marker_47166</span>
<i class="g" style="left:136px;top:260px"></i>
<span class="t" style="left:7.7px;top:274.4px;font-size:12px;line-height:20px;color:#9c9c9c;letter-spacing:-0.41px;">Marker_47167</span>
<i class="g" style="left:136px;top:278px"></i>
<span class="t" style="left:7.7px;top:292.4px;font-size:12px;line-height:20px;color:#9c9c9c;letter-spacing:-0.41px;">Marker_47169</span>
<i class="g" style="left:136px;top:296px"></i>
<span class="t" style="left:7.7px;top:310.4px;font-size:12px;line-height:20px;color:#9c9c9c;letter-spacing:-0.42px;">Marker_47170</span>
<i class="g" style="left:136px;top:314px"></i>
<span class="t" style="left:7.7px;top:328.4px;font-size:12px;line-height:20px;color:#9c9c9c;letter-spacing:-0.41px;">Marker_47171</span>
<i class="g" style="left:136px;top:332px"></i>
<span class="t" style="left:7.7px;top:346.4px;font-size:12px;line-height:20px;color:#9c9c9c;letter-spacing:-0.41px;">Marker_47172</span>
<i class="g" style="left:136px;top:350px"></i>
<span class="t" style="left:7.7px;top:364.4px;font-size:12px;line-height:20px;color:#9c9c9c;letter-spacing:-0.41px;">Marker_47173</span>
<i class="g" style="left:136px;top:368px"></i>
</div>
<div class="abs" style="left:184px;top:52px;width:1px;height:383px;background:#5e5e5e"></div>
<div class="abs" style="left:167px;top:53px;width:17px;height:382px;background:#222;border:1px solid #000"></div>
<svg style="left:172px;top:60px" width="7" height="4" viewBox="0 0 7 4"><path d="M0 4h7l-3.5-4z" fill="#e0e0e0"/></svg>
<svg style="left:172px;top:426px" width="7" height="4" viewBox="0 0 7 4"><path d="M0 0h7l-3.5 4z" fill="#e0e0e0"/></svg>
<div class="abs" style="left:168px;top:71px;width:15px;height:126px;border-radius:7px;background:linear-gradient(90deg,#747474,#666 50%,#565656)"></div>
<div class="abs" style="left:351px;top:53px;width:17px;height:382px;background:#222;border:1px solid #000"></div>
<svg style="left:356px;top:60px" width="7" height="4" viewBox="0 0 7 4"><path d="M0 4h7l-3.5-4z" fill="#e0e0e0"/></svg>
<svg style="left:356px;top:426px" width="7" height="4" viewBox="0 0 7 4"><path d="M0 0h7l-3.5 4z" fill="#e0e0e0"/></svg>
<div class="abs" style="left:352px;top:71px;width:15px;height:217px;border-radius:7px;background:linear-gradient(90deg,#747474,#666 50%,#565656)"></div>
<!--MARKERSET_E-->
</div>

<!-- ======= PERSPECTIVE VIEW ======= -->
<div id="persp" class="abs" style="left:378px;top:56px;width:1538px;height:934px">
<!--PERSP_S-->
<div class="phead" style="left:0;top:0;width:1538px"></div>
<span class="t" style="left:7.2px;top:4.0px;font-size:12px;line-height:20px;color:#d6d6d6;letter-spacing:-0.20px;">Perspective View</span>
<div class="abs" style="left:0;top:28px;width:1538px;height:26px;background:#2e2e2e;border-left:1px solid #111;border-right:1px solid #000"></div>
<div id="ptb" class="abs" style="left:0;top:28px;width:1538px;height:26px">
<!--PTB_S-->
<svg style="left:10.0px;top:6.0px" width="17" height="14" viewBox="0 0 17 14"><rect x="0.0" y="0.0" width="4.4" height="3.2" rx="1" fill="#ebebeb"/><rect x="5.8" y="0.0" width="4.4" height="3.2" rx="1" fill="#ebebeb"/><rect x="11.6" y="0.0" width="4.4" height="3.2" rx="1" fill="#ebebeb"/><rect x="0.0" y="5.1" width="4.4" height="3.2" rx="1" fill="#ebebeb"/><rect x="5.8" y="5.1" width="4.4" height="3.2" rx="1" fill="#ebebeb"/><rect x="11.6" y="5.1" width="4.4" height="3.2" rx="1" fill="#ebebeb"/><rect x="0.0" y="10.2" width="4.4" height="3.2" rx="1" fill="#ebebeb"/><rect x="5.8" y="10.2" width="4.4" height="3.2" rx="1" fill="#ebebeb"/><rect x="11.6" y="10.2" width="4.4" height="3.2" rx="1" fill="#ebebeb"/></svg>
<svg style="left:40.0px;top:6.0px" width="17" height="15" viewBox="0 0 17 15"><path d="M8.2 0.4l7.2 3-7.2 3.2-7.2-3.2z" fill="#f0f0f0"/><path d="M0.6 4.4l7 3.2v7l-7-3.4z" fill="#e2e2e2"/><path d="M15.8 4.4l-7 3.2v7l7-3.4z" fill="#d6d6d6"/></svg>
<svg style="left:70.0px;top:5.0px" width="16" height="16" viewBox="0 0 16 16"><circle cx="7.4" cy="7.6" r="4.4" fill="none" stroke="#ebebeb" stroke-width="1.6"/><path d="M7.4 0.8v4.2M7.4 10.2v4.2M0.6 7.6h4.2M10 7.6h4.2" stroke="#ebebeb" stroke-width="1.3"/><path d="M10.8 11l3.8 3.8" stroke="#ebebeb" stroke-width="2.2" stroke-linecap="round"/></svg>
<svg style="left:99.0px;top:4.0px" width="17" height="17" viewBox="0 0 17 17"><path d="M1.2 9V1.2h7.6" fill="none" stroke="#ebebeb" stroke-width="1.5" stroke-dasharray="2.2 1.4"/><circle cx="8.6" cy="9" r="4.4" fill="#2e2e2e" stroke="#ebebeb" stroke-width="1.6"/><path d="M12 12.4l3.6 3.6" stroke="#ebebeb" stroke-width="2.2" stroke-linecap="round"/></svg>
<svg style="left:129.0px;top:4.0px" width="17" height="16" viewBox="0 0 17 16"><path d="M1 4.4V1h3.2M12.4 1h3.4v3.4M1 11v3.4h3.2" fill="none" stroke="#ebebeb" stroke-width="1.5"/><circle cx="8.4" cy="7.4" r="4.4" fill="none" stroke="#ebebeb" stroke-width="1.6"/><path d="M11.8 10.8l3.6 3.6" stroke="#ebebeb" stroke-width="2.2" stroke-linecap="round"/></svg>
<svg style="left:160.0px;top:6.0px" width="17" height="13" viewBox="0 0 17 13"><g transform="translate(0.0,0.0) scale(1.00)"><path d="M1.4 2.6h2.8l1-1.8h6l1 1.8h2.8c0.7 0 1.2 0.5 1.2 1.2v7.2c0 0.7-0.5 1.2-1.2 1.2h-13.6c-0.7 0-1.2-0.5-1.2-1.2v-7.2c0-0.7 0.5-1.2 1.2-1.2z" fill="#ebebeb"/><circle cx="8.2" cy="7" r="3.4" fill="#2a2a2a"/><circle cx="8.2" cy="7" r="1.7" fill="#ebebeb"/></g></svg>
<svg style="left:190.0px;top:5.0px" width="15" height="16" viewBox="0 0 15 16"><g transform="translate(1.0,0.4) scale(1.00)"><path d="M3 2.6L10.4 7.4M3 12.4L10.4 7.4" stroke="#ebebeb" stroke-width="2"/><circle cx="3" cy="2.8" r="2.8" fill="#ebebeb"/><circle cx="10.6" cy="7.4" r="2.8" fill="#ebebeb"/><circle cx="3" cy="12.2" r="2.8" fill="#ebebeb"/></g></svg>
<div class="abs" style="left:215px;top:4px;width:1px;height:19px;background:#6a6a6a"></div>
<svg style="left:225.0px;top:4.0px" width="18" height="17" viewBox="0 0 18 17"><path d="M1 0.6l0.2 7 2-1.8 2.8-0.2z" fill="#ebebeb"/><path d="M11.4 4.6v11.2M5.8 10.2h11.2" stroke="#ebebeb" stroke-width="1.3"/><path d="M11.4 3.6l1.9 2.2h-3.8zM11.4 16.8l1.9-2.2h-3.8zM4.8 10.2l2.2-1.9v3.8zM18 10.2l-2.2-1.9v3.8z" fill="#ebebeb"/></svg>
<svg style="left:255.0px;top:5.0px" width="17" height="15" viewBox="0 0 17 15"><path d="M12.6 5.4a5.4 5.4 0 1 0 -0.6 5.6" fill="none" stroke="#ebebeb" stroke-width="1.8"/><path d="M10 7.4l5.8-0.2-2.6 4.2z" fill="#ebebeb"/></svg>
<svg style="left:286.0px;top:5.0px" width="16" height="16" viewBox="0 0 16 16"><path d="M0.6 14.4h14.8M14.4 0.8v14" stroke="#ebebeb" stroke-width="1.4" fill="none"/><path d="M3.6 12V4.4h9" stroke="#ebebeb" stroke-width="1.3" stroke-dasharray="1.3 1.3" fill="none"/><rect x="8.6" y="8.6" width="5" height="5" fill="#d0d0d0"/></svg>
<svg style="left:315.0px;top:4.0px" width="18" height="17" viewBox="0 0 18 17"><g transform="translate(0.4,0.8) scale(1.05)" fill="#dcdcdc"><circle cx="5.5" cy="1.6" r="1.55"/><path d="M3.6 3.5h3.8q2 0.1 2.3 1.9l0.7 3.9-1.1 0.3-1.1-3.4-0.1 3.6 0.6 5.8h-1.7l-1.1-5h-0.8l-1.1 5h-1.7l0.6-5.8-0.1-3.6-1.1 3.4-1.1-0.3 0.7-3.9q0.3-1.8 2.3-1.9z"/></g><circle cx="14.4" cy="5" r="1.3" fill="#ebebeb"/><path d="M15.6 8.2a3 3 0 0 1-3 4.6M11.4 12.8a3 3 0 0 1 2.6-4.6" stroke="#ebebeb" stroke-width="1.2" fill="none"/><path d="M11 13.8l2.4-2.2v3.6zM15.8 7l-2.2 2.2-0.2-3z" fill="#ebebeb"/></svg>
<svg style="left:345.0px;top:4.0px" width="18" height="17" viewBox="0 0 18 17"><path d="M1.6 8.6l3-4.2 9.4-2.6 2 7-8.4 6.4-4.6-1z" fill="#e6e6e6"/><circle cx="4.6" cy="8" r="1.1" fill="#2e2e2e"/><path d="M13.6 3.4l2.2-2.6" stroke="#e6e6e6" stroke-width="1.1"/><path d="M9 7.4l3.4-0.8M9.6 9.4l3.4-0.8" stroke="#9a9a9a" stroke-width="0.9"/><path d="M3.4 3.8l1.4-2 1.4 1" stroke="#cfcfcf" stroke-width="1" fill="none"/></svg>
<div class="abs" style="left:369px;top:2px;width:30px;height:22px;border-radius:3px;background:linear-gradient(#2c5898 0,#203b64 22%,#1d3459 55%,#234c86 88%,#2b62b0 100%);box-shadow:inset 0 0 3px 1px #3572c4,0 0 0 1px #16263f"></div>
<span class="t" style="left:376px;top:6px;font-size:10px;font-weight:bold;color:#f4f4f4;transform:scaleX(0.78);transform-origin:0 0;letter-spacing:0.6px">LCL</span>
<span class="t" style="left:405px;top:6px;font-size:10px;font-weight:bold;color:#d4d4d4;transform:scaleX(0.78);transform-origin:0 0;letter-spacing:0.6px">GBL</span>
<div class="abs" style="left:431px;top:4px;width:1px;height:19px;background:#6a6a6a"></div>
<div class="abs" style="left:435px;top:2px;width:29px;height:22px;border-radius:3px;background:linear-gradient(#2c5898 0,#203b64 22%,#1d3459 55%,#234c86 88%,#2b62b0 100%);box-shadow:inset 0 0 3px 1px #3572c4,0 0 0 1px #16263f"></div>
<div class="abs" style="left:465px;top:2px;width:29px;height:22px;border-radius:3px;background:linear-gradient(#2c5898 0,#203b64 22%,#1d3459 55%,#234c86 88%,#2b62b0 100%);box-shadow:inset 0 0 3px 1px #3572c4,0 0 0 1px #16263f"></div>
<div class="abs" style="left:495px;top:2px;width:30px;height:22px;border-radius:3px;background:linear-gradient(#2c5898 0,#203b64 22%,#1d3459 55%,#234c86 88%,#2b62b0 100%);box-shadow:inset 0 0 3px 1px #3572c4,0 0 0 1px #16263f"></div>
<div class="abs" style="left:526px;top:2px;width:29px;height:22px;border-radius:3px;background:linear-gradient(#2c5898 0,#203b64 22%,#1d3459 55%,#234c86 88%,#2b62b0 100%);box-shadow:inset 0 0 3px 1px #3572c4,0 0 0 1px #16263f"></div>
<svg style="left:442.0px;top:5.0px" width="16" height="16" viewBox="0 0 16 16"><rect x="1.0" y="1.0" width="10.4" height="10.4" fill="none" stroke="#ebebeb" stroke-width="1.5" stroke-dasharray="2.4 1.4"/><circle cx="11" cy="11.4" r="3.6" fill="#ebebeb"/></svg>
<svg style="left:472.0px;top:5.0px" width="17" height="16" viewBox="0 0 17 16"><rect x="1.0" y="1.0" width="10.4" height="10.4" fill="none" stroke="#ebebeb" stroke-width="1.5" stroke-dasharray="2.4 1.4"/><rect x="5.4" y="7.6" width="11" height="7.4" fill="#1e3860"/><g transform="translate(6.0,8.0) scale(0.68)"><path d="M1.4 2.6h2.8l1-1.8h6l1 1.8h2.8c0.7 0 1.2 0.5 1.2 1.2v7.2c0 0.7-0.5 1.2-1.2 1.2h-13.6c-0.7 0-1.2-0.5-1.2-1.2v-7.2c0-0.7 0.5-1.2 1.2-1.2z" fill="#ebebeb"/><circle cx="8.2" cy="7" r="3.4" fill="#1e3860"/><circle cx="8.2" cy="7" r="1.7" fill="#ebebeb"/></g></svg>
<svg style="left:502.0px;top:5.0px" width="17" height="16" viewBox="0 0 17 16"><rect x="1.0" y="1.0" width="10.4" height="10.4" fill="none" stroke="#ebebeb" stroke-width="1.5" stroke-dasharray="2.4 1.4"/><rect x="6.6" y="5" width="9" height="11" fill="#1e3860" opacity="0.9"/><g transform="translate(7.0,4.4) scale(0.78)"><path d="M3 2.6L10.4 7.4M3 12.4L10.4 7.4" stroke="#ebebeb" stroke-width="2"/><circle cx="3" cy="2.8" r="2.8" fill="#ebebeb"/><circle cx="10.6" cy="7.4" r="2.8" fill="#ebebeb"/><circle cx="3" cy="12.2" r="2.8" fill="#ebebeb"/></g></svg>
<svg style="left:531.0px;top:4.0px" width="18" height="17" viewBox="0 0 18 17"><rect x="1.4" y="2.0" width="9.6" height="10.4" fill="none" stroke="#ebebeb" stroke-width="1.5" stroke-dasharray="2.4 1.4"/><rect x="6.6" y="0.6" width="10" height="16" fill="#1f3a62"/><g transform="translate(6.8,0.6) scale(1.04)" fill="#e6e6e6"><circle cx="5.5" cy="1.6" r="1.55"/><path d="M3.6 3.5h3.8q2 0.1 2.3 1.9l0.7 3.9-1.1 0.3-1.1-3.4-0.1 3.6 0.6 5.8h-1.7l-1.1-5h-0.8l-1.1 5h-1.7l0.6-5.8-0.1-3.6-1.1 3.4-1.1-0.3 0.7-3.9q0.3-1.8 2.3-1.9z"/></g></svg>
<svg style="left:561.0px;top:4.0px" width="18" height="17" viewBox="0 0 18 17"><rect x="1.4" y="2.0" width="9.6" height="10.4" fill="none" stroke="#ebebeb" stroke-width="1.5" stroke-dasharray="2.4 1.4"/><rect x="7.4" y="0.6" width="10" height="16" fill="#2e2e2e"/><g fill="#d6d6d6"><circle cx="12" cy="2" r="1.2"/><circle cx="9" cy="5" r="0.9"/><circle cx="12" cy="5.2" r="0.9"/><circle cx="15" cy="5" r="0.9"/><circle cx="8" cy="8.2" r="0.9"/><circle cx="16" cy="8.2" r="0.9"/><circle cx="12" cy="8.4" r="0.9"/><circle cx="10.4" cy="11.6" r="0.9"/><circle cx="13.6" cy="11.6" r="0.9"/><circle cx="9.8" cy="15" r="0.9"/><circle cx="14.2" cy="15" r="0.9"/></g><path d="M12 3v5.6M9 5h6M12 8.4l-2 3.2-0.4 3.4M12 8.4l2 3.2 0.4 3.4M9 5l-1 3.2M15 5l1 3.2" stroke="#8a8a8a" stroke-width="0.6" fill="none"/></svg>
<div class="abs" style="left:587px;top:4px;width:1px;height:19px;background:#6a6a6a"></div>
<svg style="left:598.0px;top:6.0px" width="17" height="13" viewBox="0 0 17 13"><path d="M0.6 6.4q7.8-10 15.6 0q-7.8 10-15.6 0z" fill="#f0f0f0"/><circle cx="8.4" cy="6.4" r="3.2" fill="#2a2a2a"/><circle cx="8.4" cy="6.4" r="1.3" fill="#f0f0f0"/></svg>
<div class="abs" style="left:621px;top:2px;width:29px;height:22px;border-radius:3px;background:linear-gradient(#2c5898 0,#203b64 22%,#1d3459 55%,#234c86 88%,#2b62b0 100%);box-shadow:inset 0 0 3px 1px #3572c4,0 0 0 1px #16263f"></div>
<div class="abs" style="left:651px;top:2px;width:29px;height:22px;border-radius:3px;background:linear-gradient(#2c5898 0,#203b64 22%,#1d3459 55%,#234c86 88%,#2b62b0 100%);box-shadow:inset 0 0 3px 1px #3572c4,0 0 0 1px #16263f"></div>
<div class="abs" style="left:681px;top:2px;width:29px;height:22px;border-radius:3px;background:linear-gradient(#2c5898 0,#203b64 22%,#1d3459 55%,#234c86 88%,#2b62b0 100%);box-shadow:inset 0 0 3px 1px #3572c4,0 0 0 1px #16263f"></div>
<svg style="left:628.0px;top:4.0px" width="18" height="17" viewBox="0 0 18 17"><circle cx="4.6" cy="4.8" r="2.3" fill="#ebebeb"/><path d="M6.7 12.8q4.8 -5.6 9.5 0q-4.8 5.6 -9.5 0z" fill="#ebebeb"/><circle cx="11.4" cy="12.8" r="2.0" fill="#2a3f60"/><circle cx="11.4" cy="12.8" r="0.8" fill="#ebebeb"/></svg>
<svg style="left:656.0px;top:4.0px" width="20" height="17" viewBox="0 0 20 17"><g transform="translate(0.6,0.6) scale(0.90)" fill="#e6e6e6"><circle cx="5.5" cy="1.6" r="1.55"/><path d="M3.6 3.5h3.8q2 0.1 2.3 1.9l0.7 3.9-1.1 0.3-1.1-3.4-0.1 3.6 0.6 5.8h-1.7l-1.1-5h-0.8l-1.1 5h-1.7l0.6-5.8-0.1-3.6-1.1 3.4-1.1-0.3 0.7-3.9q0.3-1.8 2.3-1.9z"/></g><path d="M8.7 12.8q4.8 -5.6 9.5 0q-4.8 5.6 -9.5 0z" fill="#ebebeb"/><circle cx="13.4" cy="12.8" r="2.0" fill="#2a3f60"/><circle cx="13.4" cy="12.8" r="0.8" fill="#ebebeb"/></svg>
<svg style="left:686.0px;top:4.0px" width="20" height="17" viewBox="0 0 20 17"><g transform="translate(1.4,0.6) scale(0.80)"><path d="M3 2.6L10.4 7.4M3 12.4L10.4 7.4" stroke="#ebebeb" stroke-width="2"/><circle cx="3" cy="2.8" r="2.8" fill="#ebebeb"/><circle cx="10.6" cy="7.4" r="2.8" fill="#ebebeb"/><circle cx="3" cy="12.2" r="2.8" fill="#ebebeb"/></g><path d="M8.7 12.8q4.8 -5.6 9.5 0q-4.8 5.6 -9.5 0z" fill="#ebebeb"/><circle cx="13.4" cy="12.8" r="2.0" fill="#2a3f60"/><circle cx="13.4" cy="12.8" r="0.8" fill="#ebebeb"/></svg>
<div class="abs" style="left:713px;top:4px;width:1px;height:19px;background:#6a6a6a"></div>
<svg style="left:723.0px;top:4.0px" width="18" height="17" viewBox="0 0 18 17"><g transform="translate(0.6,0.8) scale(0.92)" fill="#dadada"><circle cx="5.5" cy="1.6" r="1.55"/><path d="M3.6 3.5h3.8q2 0.1 2.3 1.9l0.7 3.9-1.1 0.3-1.1-3.4-0.1 3.6 0.6 5.8h-1.7l-1.1-5h-0.8l-1.1 5h-1.7l0.6-5.8-0.1-3.6-1.1 3.4-1.1-0.3 0.7-3.9q0.3-1.8 2.3-1.9z"/></g><path d="M9.4 15.6l0.8-2.4 5.4-5.4 1.8 1.8-5.4 5.4z" fill="#e8e8e8"/></svg>
<svg style="left:753.0px;top:5.0px" width="19" height="16" viewBox="0 0 19 16"><g transform="translate(0.4,0.4)"><path d="M4.4 2.8L2.4 8.6M3.2 10l6 2.6" stroke="#ebebeb" stroke-width="1.5" fill="none"/><circle cx="4.8" cy="2" r="1.4" fill="#2e2e2e" stroke="#ebebeb" stroke-width="1.2"/><circle cx="2.2" cy="9.6" r="1.5" fill="#2e2e2e" stroke="#ebebeb" stroke-width="1.2"/><circle cx="10" cy="13" r="1.5" fill="#2e2e2e" stroke="#ebebeb" stroke-width="1.2"/></g><rect x="13" y="0.6" width="5.4" height="14.6" fill="#2e2e2e"/><path d="M13.4 1.4h4.6M15.4 3.4h2.6M13.4 5.4h4.6M15.4 7.4h2.6M13.4 9.4h4.6M15.4 11.4h2.6M13.4 13.6h4.6" stroke="#ebebeb" stroke-width="1.2"/><path d="M17.6 0.8v13.4" stroke="#ebebeb" stroke-width="1.2"/></svg>
<svg style="left:784.0px;top:5.0px" width="18" height="16" viewBox="0 0 18 16"><g transform="translate(0.4,0.4)"><path d="M4.4 2.8L2.4 8.6M3.2 10l6 2.6" stroke="#ebebeb" stroke-width="1.5" fill="none"/><circle cx="4.8" cy="2" r="1.4" fill="#2e2e2e" stroke="#ebebeb" stroke-width="1.2"/><circle cx="2.2" cy="9.6" r="1.5" fill="#2e2e2e" stroke="#ebebeb" stroke-width="1.2"/><circle cx="10" cy="13" r="1.5" fill="#2e2e2e" stroke="#ebebeb" stroke-width="1.2"/></g><path d="M12 2.6v4M12 6.4l-3 2.4M12 6.4l3.4 2" stroke="#ebebeb" stroke-width="1.3" fill="none"/></svg>
<!--PTB_E-->
</div>
<div class="abs" style="left:0;top:54px;width:1538px;height:878px;background:#000;overflow:hidden;border-right:1px solid #000">
<svg width="1538" height="878" viewBox="378 110 1538 878" style="left:0;top:0">
<g stroke="#1d1d1d" stroke-width="1.8" fill="none">
<line x1="378.0" y1="166.1" x2="1915.0" y2="152.9"/>
<line x1="378.0" y1="254.0" x2="1915.0" y2="240.3"/>
<line x1="378.0" y1="368.7" x2="1915.0" y2="352.6"/>
<line x1="378.0" y1="753.3" x2="1915.0" y2="729.3"/>
<line x1="434.1" y1="110.0" x2="378.0" y2="158.1"/>
<line x1="606.6" y1="110.0" x2="378.0" y2="378.7"/>
<line x1="779.0" y1="110.0" x2="378.0" y2="830.7"/>
<line x1="951.5" y1="110.0" x2="714.9" y2="988.0"/>
<line x1="1298.4" y1="110.0" x2="1562.2" y2="988.0"/>
<line x1="1470.8" y1="110.0" x2="1915.0" y2="865.0"/>
<line x1="1643.3" y1="110.0" x2="1915.0" y2="419.0"/>
<line x1="1815.7" y1="110.0" x2="1915.0" y2="193.0"/>
</g>
<g stroke="#848484" stroke-width="2.2" fill="none">
<line x1="378.0" y1="526.3" x2="1915.0" y2="507.0"/>
<line x1="1124.7" y1="110.0" x2="1138.8" y2="988.0"/>
</g>
<g fill="#fff">
<circle cx="917.6" cy="450.0" r="18.0"/>
<circle cx="865.6" cy="483.7" r="18.0"/>
<circle cx="941.5" cy="480.3" r="18.5"/>
<circle cx="881.3" cy="504.8" r="18.5"/>
<circle cx="933.3" cy="509.0" r="19.0"/>
<circle cx="897.3" cy="526.7" r="19.0"/>
<circle cx="921.2" cy="536.5" r="20.0"/>
<circle cx="962.6" cy="529.5" r="20.0"/>
<circle cx="993.0" cy="512.6" r="18.5"/>
<circle cx="1016.9" cy="536.5" r="19.0"/>
<circle cx="893.7" cy="554.8" r="19.5"/>
<circle cx="878.2" cy="570.3" r="20.0"/>
<circle cx="940.4" cy="597.0" r="21.0"/>
<circle cx="984.0" cy="585.2" r="21.0"/>
<circle cx="1026.7" cy="578.7" r="20.0"/>
<circle cx="915.6" cy="618.7" r="21.0"/>
<circle cx="869.2" cy="613.0" r="20.0"/>
<circle cx="867.8" cy="637.8" r="21.0"/>
<circle cx="872.0" cy="663.0" r="22.0"/>
<circle cx="1028.0" cy="613.9" r="20.0"/>
<circle cx="1001.4" cy="628.0" r="21.0"/>
<circle cx="964.0" cy="646.6" r="21.8"/>
<circle cx="930.2" cy="661.7" r="21.0"/>
<circle cx="1018.8" cy="663.0" r="21.0"/>
<circle cx="985.6" cy="683.4" r="21.6"/>
<circle cx="950.2" cy="690.8" r="22.8"/>
<circle cx="1224.1" cy="445.2" r="17.7"/>
<circle cx="1203.0" cy="468.5" r="18.0"/>
<circle cx="1277.0" cy="472.4" r="18.0"/>
<circle cx="1198.8" cy="501.4" r="19.0"/>
<circle cx="1264.3" cy="500.5" r="18.3"/>
<circle cx="1152.7" cy="502.8" r="18.5"/>
<circle cx="1122.3" cy="523.0" r="19.0"/>
<circle cx="1170.7" cy="532.3" r="19.7"/>
<circle cx="1240.4" cy="521.0" r="19.0"/>
<circle cx="1213.7" cy="540.0" r="20.0"/>
<circle cx="1239.0" cy="554.8" r="19.7"/>
<circle cx="1104.9" cy="555.7" r="19.7"/>
<circle cx="1260.0" cy="572.3" r="19.7"/>
<circle cx="1142.0" cy="579.6" r="20.5"/>
<circle cx="1115.3" cy="595.0" r="20.0"/>
<circle cx="1188.4" cy="594.8" r="21.0"/>
<circle cx="1219.3" cy="608.3" r="20.5"/>
<circle cx="1267.1" cy="610.2" r="20.0"/>
<circle cx="1132.1" cy="619.5" r="21.0"/>
<circle cx="1264.3" cy="636.4" r="21.0"/>
<circle cx="1118.0" cy="654.0" r="21.0"/>
<circle cx="1164.5" cy="645.2" r="21.8"/>
<circle cx="1201.0" cy="651.3" r="21.0"/>
<circle cx="1260.0" cy="665.0" r="21.4"/>
<circle cx="1145.4" cy="677.7" r="21.4"/>
<circle cx="1181.4" cy="679.4" r="21.4"/>
<circle cx="669.6" cy="628.2" r="21.0"/>
<circle cx="786.3" cy="752.5" r="23.3"/>
<circle cx="1291.6" cy="749.3" r="23.0"/>
</g>
<g>
<rect x="465" y="867" width="4.6" height="33.4" fill="#00ee00"/><path d="M463 868.5l4.3-19 4.3 19z" fill="#00f400"/>
<rect x="464.8" y="900.4" width="4.7" height="26" fill="#0000f2"/><path d="M467.2 920.5l4.8 8.5-4.6 14.2-4-14.2z" fill="#0000ff"/>
<rect x="469.4" y="896.8" width="42" height="5.2" fill="#f20000"/><path d="M510.8 894.8l23.2 4.5-23.2 4.9z" fill="#ff0000"/>
</g>
</svg>
<div class="abs" style="left:17px;top:16px;width:53px;height:20px;border-radius:6px;border:1px solid #8fcaf2;background:linear-gradient(#1b9ce9 0,#128ade 50%,#0c78c8 100%)"></div>
<span class="t" style="left:27.0px;top:15.8px;font-size:12px;line-height:20px;color:#fff;letter-spacing:0.93px;font-weight:bold;">EDIT</span>
<span class="t" style="left:83.1px;top:15.8px;font-size:12px;line-height:20px;color:#363636;letter-spacing:1.30px;font-weight:bold;">2D</span>
<div class="abs" style="left:109px;top:20px;width:1px;height:13px;background:#303030"></div>
<span class="t" style="left:116.6px;top:15.8px;font-size:12px;line-height:20px;color:#dadada;letter-spacing:-0.35px;font-weight:bold;">3D</span>
<div class="abs" style="left:141px;top:20px;width:1px;height:13px;background:#303030"></div>
<span class="t" style="left:147.5px;top:15.8px;font-size:12px;line-height:20px;color:#363636;letter-spacing:-2.05px;font-weight:bold;">JT</span>
<span class="t" style="left:1404.1px;top:818.8px;font-size:20px;line-height:20px;color:#fff;letter-spacing:0.71px;">Markers: 55</span>
<span class="t" style="left:1399.3px;top:843.8px;font-size:20px;line-height:20px;color:#fff;letter-spacing:0.55px;">Selected: 0</span>
</div>
<div class="abs" style="left:0;top:932px;width:1538px;height:2px;background:#5a5a5a"></div>
<!--PERSP_E-->
</div>

<!-- ======= TIMELINE ======= -->
<div id="timeline" class="abs" style="left:378px;top:993px;width:1538px;height:119px">
<!--TIMELINE_S-->
<div class="phead" style="left:0;top:0;width:1538px"></div>
<span class="t" style="left:7.2px;top:5.0px;font-size:12px;line-height:20px;color:#d4d4d4;letter-spacing:0.24px;">Timeline</span>
<span class="t" style="left:59.1px;top:5.0px;font-size:12px;line-height:20px;color:#d4d4d4;letter-spacing:0.70px;">-</span>
<span class="t" style="left:69.5px;top:5.0px;font-size:12px;line-height:20px;color:#d4d4d4;letter-spacing:-0.42px;">828816 sentences</span>
<svg style="left:1520px;top:9px" width="9" height="9" viewBox="0 0 9 9"><path d="M1 1l7 7M8 1l-7 7" stroke="#e8e8e8" stroke-width="1.8"/></svg>
<div class="abs" style="left:0;top:28px;width:1538px;height:91px;background:#3a3a3a;border:1px solid #1c1c1c;border-top:none;border-bottom-color:#000"></div>
<div class="abs" style="left:1px;top:28px;width:1536px;height:20px;background:#1f1f1f;overflow:hidden">
<span class="t" style="left:2.8px;top:-1.8px;font-size:11px;line-height:20px;color:#d4d4d4;letter-spacing:0.50px;">0</span>
<div class="abs" style="left:42.6px;top:1px;width:1px;height:18px;background:#34343c"></div>
<span class="t" style="left:43.9px;top:-1.8px;font-size:11px;line-height:20px;color:#d4d4d4;letter-spacing:-0.10px;">1920</span>
<div class="abs" style="left:84.4px;top:1px;width:1px;height:18px;background:#34343c"></div>
<span class="t" style="left:86.2px;top:-1.8px;font-size:11px;line-height:20px;color:#d4d4d4;letter-spacing:-0.25px;">3840</span>
<div class="abs" style="left:126.3px;top:1px;width:1px;height:18px;background:#34343c"></div>
<span class="t" style="left:128.1px;top:-1.8px;font-size:11px;line-height:20px;color:#d4d4d4;letter-spacing:-0.23px;">5760</span>
<div class="abs" style="left:168.2px;top:1px;width:1px;height:18px;background:#34343c"></div>
<span class="t" style="left:169.8px;top:-1.8px;font-size:11px;line-height:20px;color:#d4d4d4;letter-spacing:-0.20px;">7680</span>
<div class="abs" style="left:210.0px;top:1px;width:1px;height:18px;background:#34343c"></div>
<span class="t" style="left:211.8px;top:-1.8px;font-size:11px;line-height:20px;color:#d4d4d4;letter-spacing:-0.22px;">9600</span>
<div class="abs" style="left:251.9px;top:1px;width:1px;height:18px;background:#34343c"></div>
<span class="t" style="left:253.3px;top:-1.8px;font-size:11px;line-height:20px;color:#d4d4d4;letter-spacing:0.22px;">11520</span>
<div class="abs" style="left:293.8px;top:1px;width:1px;height:18px;background:#34343c"></div>
<span class="t" style="left:295.1px;top:-1.8px;font-size:11px;line-height:20px;color:#d4d4d4;letter-spacing:0.02px;">13440</span>
<div class="abs" style="left:335.7px;top:1px;width:1px;height:18px;background:#34343c"></div>
<span class="t" style="left:337.0px;top:-1.8px;font-size:11px;line-height:20px;color:#d4d4d4;letter-spacing:0.02px;">15360</span>
<div class="abs" style="left:377.5px;top:1px;width:1px;height:18px;background:#34343c"></div>
<span class="t" style="left:378.9px;top:-1.8px;font-size:11px;line-height:20px;color:#d4d4d4;letter-spacing:0.02px;">17280</span>
<div class="abs" style="left:419.4px;top:1px;width:1px;height:18px;background:#34343c"></div>
<span class="t" style="left:420.8px;top:-1.8px;font-size:11px;line-height:20px;color:#d4d4d4;letter-spacing:0.02px;">19200</span>
<div class="abs" style="left:461.3px;top:1px;width:1px;height:18px;background:#34343c"></div>
<span class="t" style="left:462.9px;top:-1.8px;font-size:11px;line-height:20px;color:#d4d4d4;letter-spacing:0.15px;">21120</span>
<div class="abs" style="left:503.1px;top:1px;width:1px;height:18px;background:#34343c"></div>
<span class="t" style="left:504.8px;top:-1.8px;font-size:11px;line-height:20px;color:#d4d4d4;letter-spacing:-0.05px;">23040</span>
<div class="abs" style="left:545.0px;top:1px;width:1px;height:18px;background:#34343c"></div>
<span class="t" style="left:546.7px;top:-1.8px;font-size:11px;line-height:20px;color:#d4d4d4;letter-spacing:-0.05px;">24960</span>
<div class="abs" style="left:586.9px;top:1px;width:1px;height:18px;background:#34343c"></div>
<span class="t" style="left:588.5px;top:-1.8px;font-size:11px;line-height:20px;color:#d4d4d4;letter-spacing:-0.05px;">26880</span>
<div class="abs" style="left:628.8px;top:1px;width:1px;height:18px;background:#34343c"></div>
<span class="t" style="left:630.4px;top:-1.8px;font-size:11px;line-height:20px;color:#d4d4d4;letter-spacing:-0.05px;">28800</span>
<div class="abs" style="left:670.6px;top:1px;width:1px;height:18px;background:#34343c"></div>
<span class="t" style="left:672.4px;top:-1.8px;font-size:11px;line-height:20px;color:#d4d4d4;letter-spacing:-0.09px;">30720</span>
<div class="abs" style="left:712.5px;top:1px;width:1px;height:18px;background:#34343c"></div>
<span class="t" style="left:714.3px;top:-1.8px;font-size:11px;line-height:20px;color:#d4d4d4;letter-spacing:-0.09px;">32640</span>
<div class="abs" style="left:754.4px;top:1px;width:1px;height:18px;background:#34343c"></div>
<span class="t" style="left:756.2px;top:-1.8px;font-size:11px;line-height:20px;color:#d4d4d4;letter-spacing:-0.09px;">34560</span>
<div class="abs" style="left:796.2px;top:1px;width:1px;height:18px;background:#34343c"></div>
<span class="t" style="left:798.0px;top:-1.8px;font-size:11px;line-height:20px;color:#d4d4d4;letter-spacing:-0.09px;">36480</span>
<div class="abs" style="left:838.1px;top:1px;width:1px;height:18px;background:#34343c"></div>
<span class="t" style="left:839.9px;top:-1.8px;font-size:11px;line-height:20px;color:#d4d4d4;letter-spacing:-0.09px;">38400</span>
<div class="abs" style="left:880.0px;top:1px;width:1px;height:18px;background:#34343c"></div>
<span class="t" style="left:881.9px;top:-1.8px;font-size:11px;line-height:20px;color:#d4d4d4;letter-spacing:-0.12px;">40320</span>
<div class="abs" style="left:921.8px;top:1px;width:1px;height:18px;background:#34343c"></div>
<span class="t" style="left:923.8px;top:-1.8px;font-size:11px;line-height:20px;color:#d4d4d4;letter-spacing:-0.12px;">42240</span>
<div class="abs" style="left:963.7px;top:1px;width:1px;height:18px;background:#34343c"></div>
<span class="t" style="left:965.7px;top:-1.8px;font-size:11px;line-height:20px;color:#d4d4d4;letter-spacing:-0.12px;">44160</span>
<div class="abs" style="left:1005.6px;top:1px;width:1px;height:18px;background:#34343c"></div>
<span class="t" style="left:1007.5px;top:-1.8px;font-size:11px;line-height:20px;color:#d4d4d4;letter-spacing:-0.12px;">46080</span>
<div class="abs" style="left:1047.5px;top:1px;width:1px;height:18px;background:#34343c"></div>
<span class="t" style="left:1049.4px;top:-1.8px;font-size:11px;line-height:20px;color:#d4d4d4;letter-spacing:-0.12px;">48000</span>
<div class="abs" style="left:1089.3px;top:1px;width:1px;height:18px;background:#34343c"></div>
<span class="t" style="left:1091.3px;top:-1.8px;font-size:11px;line-height:20px;color:#d4d4d4;letter-spacing:-0.12px;">49920</span>
<div class="abs" style="left:1131.2px;top:1px;width:1px;height:18px;background:#34343c"></div>
<span class="t" style="left:1132.9px;top:-1.8px;font-size:11px;line-height:20px;color:#d4d4d4;letter-spacing:-0.07px;">51840</span>
<div class="abs" style="left:1173.1px;top:1px;width:1px;height:18px;background:#34343c"></div>
<span class="t" style="left:1174.8px;top:-1.8px;font-size:11px;line-height:20px;color:#d4d4d4;letter-spacing:-0.07px;">53760</span>
<div class="abs" style="left:1214.9px;top:1px;width:1px;height:18px;background:#34343c"></div>
<span class="t" style="left:1216.7px;top:-1.8px;font-size:11px;line-height:20px;color:#d4d4d4;letter-spacing:-0.07px;">55680</span>
<div class="abs" style="left:1256.8px;top:1px;width:1px;height:18px;background:#34343c"></div>
<span class="t" style="left:1258.5px;top:-1.8px;font-size:11px;line-height:20px;color:#d4d4d4;letter-spacing:-0.07px;">57600</span>
<div class="abs" style="left:1298.7px;top:1px;width:1px;height:18px;background:#34343c"></div>
<span class="t" style="left:1300.4px;top:-1.8px;font-size:11px;line-height:20px;color:#d4d4d4;letter-spacing:-0.07px;">59520</span>
<div class="abs" style="left:1340.5px;top:1px;width:1px;height:18px;background:#34343c"></div>
<span class="t" style="left:1342.2px;top:-1.8px;font-size:11px;line-height:20px;color:#d4d4d4;letter-spacing:-0.05px;">61440</span>
<div class="abs" style="left:1382.4px;top:1px;width:1px;height:18px;background:#34343c"></div>
<span class="t" style="left:1384.1px;top:-1.8px;font-size:11px;line-height:20px;color:#d4d4d4;letter-spacing:-0.05px;">63360</span>
<div class="abs" style="left:1424.3px;top:1px;width:1px;height:18px;background:#34343c"></div>
<span class="t" style="left:1425.9px;top:-1.8px;font-size:11px;line-height:20px;color:#d4d4d4;letter-spacing:-0.05px;">65280</span>
<div class="abs" style="left:1466.1px;top:1px;width:1px;height:18px;background:#34343c"></div>
<span class="t" style="left:1467.8px;top:-1.8px;font-size:11px;line-height:20px;color:#d4d4d4;letter-spacing:-0.05px;">67200</span>
<div class="abs" style="left:1508.0px;top:1px;width:1px;height:18px;background:#34343c"></div>
<span class="t" style="left:1509.7px;top:-1.8px;font-size:11px;line-height:20px;color:#d4d4d4;letter-spacing:-0.05px;">69120</span>
<div class="abs" style="left:1549.9px;top:1px;width:1px;height:18px;background:#34343c"></div>
<span class="t" style="left:1551.5px;top:-1.8px;font-size:11px;line-height:20px;color:#d4d4d4;letter-spacing:-0.05px;">71040</span>
<div class="abs" style="left:66px;top:2px;width:1px;height:17px;background:#fff"></div>
</div>
<div class="abs" style="left:1px;top:48px;width:1536px;height:10px;background:#111"></div>
<div class="abs" style="left:3px;top:49px;width:1533px;height:8px;border-radius:2px 4px 4px 2px;background:linear-gradient(#7c7c7c,#5e5e5e 50%,#484848)"></div>
<div class="abs" style="left:1px;top:48px;width:12px;height:10px;background:linear-gradient(90deg,#1a1a1a,rgba(26,26,26,0))"></div>
<div class="abs" style="left:10px;top:51px;width:1px;height:4px;background:#2a2a2a"></div>
<div class="abs" style="left:12px;top:51px;width:1px;height:4px;background:#2a2a2a"></div>
<div class="abs" style="left:14px;top:51px;width:1px;height:4px;background:#2a2a2a"></div>
<div class="abs" style="left:769px;top:51px;width:1px;height:4px;background:#2a2a2a"></div>
<div class="abs" style="left:772px;top:51px;width:1px;height:4px;background:#2a2a2a"></div>
<div class="abs" style="left:775px;top:51px;width:1px;height:4px;background:#2a2a2a"></div>
<div class="abs" style="left:1527px;top:51px;width:1px;height:4px;background:#2a2a2a"></div>
<div class="abs" style="left:1529px;top:51px;width:1px;height:4px;background:#2a2a2a"></div>
<div class="abs" style="left:1531px;top:51px;width:1px;height:4px;background:#2a2a2a"></div>
<div class="abs" style="left:1px;top:58px;width:1536px;height:1px;background:#000"></div>
<div class="abs" style="left:1px;top:59px;width:1536px;height:1px;background:#4a4a4a"></div>
<div class="abs" style="left:14px;top:76px;width:52px;height:22px;border-radius:3px 0 0 3px;background:linear-gradient(#343434,#2a2a2a);border-top:1px solid #5a5a5a;box-shadow:0 1px 0 #2a2a2a"></div>
<span class="t" style="left:27.2px;top:77.0px;font-size:13px;line-height:20px;color:#c6c6c6;letter-spacing:-0.10px;">Live</span>
<div class="abs" style="left:65px;top:76px;width:51px;height:22px;border-radius:0 3px 3px 0;background:linear-gradient(#0e7cc0,#1593dc 60%,#1a9ce6);box-shadow:0 1px 0 #0a5a90"></div>
<span class="t" style="left:78.6px;top:77.0px;font-size:13px;line-height:20px;color:#fff;letter-spacing:-0.75px;font-weight:bold;">Edit</span>
<svg style="left:251.0px;top:82.0px" width="18" height="10" viewBox="0 0 18 10"><rect x="0" y="0" width="2.2" height="10" fill="#f4f4f4"/><path d="M9.5 0v10l-7-5zM17 0v10l-7-5z" fill="#f4f4f4"/></svg>
<svg style="left:290.0px;top:82.0px" width="11" height="10" viewBox="0 0 11 10"><rect x="0" y="0" width="2.2" height="10" fill="#f4f4f4"/><path d="M10.5 0v10l-7.5-5z" fill="#f4f4f4"/></svg>
<svg style="left:321.0px;top:77.0px" width="17" height="21" viewBox="0 0 17 21"><path d="M17 0v21l-17-10.5z" fill="#f4f4f4"/></svg>
<svg style="left:356.0px;top:77.0px" width="17" height="21" viewBox="0 0 17 21"><path d="M0 0v21l17-10.5z" fill="#f4f4f4"/></svg>
<svg style="left:395.0px;top:82.0px" width="11" height="10" viewBox="0 0 11 10"><rect x="8.8" y="0" width="2.2" height="10" fill="#f4f4f4"/><path d="M0.5 0v10l7.5-5z" fill="#f4f4f4"/></svg>
<svg style="left:426.0px;top:82.0px" width="18" height="10" viewBox="0 0 18 10"><rect x="15.8" y="0" width="2.2" height="10" fill="#f4f4f4"/><path d="M1 0v10l7-5zM8.5 0v10l7-5z" fill="#f4f4f4"/></svg>
<div class="abs" style="left:513px;top:68px;width:190px;height:40px;border-radius:7px;background:linear-gradient(#fffef0 0,#fffbe0 50%,#f3efcf 52%,#f7f4dc 100%);border:1px solid #222"></div>
<span class="t" style="left:558.0px;top:70.2px;font-size:17px;line-height:20px;color:#1c1c1c;letter-spacing:0.95px;font-weight:bold;">0:00:12:141</span>
<span class="t" style="left:593.5px;top:86.8px;font-size:12px;line-height:20px;color:#55554c;letter-spacing:1.40px;font-weight:bold;">3021</span>
<div class="abs" style="left:712px;top:70px;width:50px;height:18px;background:#3f3f3f;border:1px solid #0a0a0a"></div>
<div class="abs" style="left:712px;top:87px;width:50px;height:18px;background:#3f3f3f;border:1px solid #0a0a0a"></div>
<span class="t" style="left:717.3px;top:68.6px;font-size:11px;line-height:20px;color:#cfcfcf;letter-spacing:-0.00px;">0</span>
<span class="t" style="left:717.5px;top:85.7px;font-size:11px;line-height:20px;color:#cfcfcf;letter-spacing:0.01px;">70367</span>
<div class="abs" style="left:769px;top:78px;width:32px;height:26px;border-radius:4px;background:linear-gradient(#a6a6a6,#8c8c8c 45%,#787878 60%,#6c6c6c);box-shadow:0 0 0 1px #333"></div>
<svg style="left:777.5px;top:84.5px" width="15" height="12" viewBox="0 0 15 12"><path d="M2.6 3v5.6h6.4" stroke="#fff" stroke-width="2" fill="none"/><path d="M0 3.6l2.6-3.6 2.6 3.6z" fill="#fff"/><path d="M12.2 8V2.4h-6.4" stroke="#fff" stroke-width="2" fill="none"/><path d="M9.6 7.4l2.6 3.6 2.6-3.6z" fill="#fff"/></svg>
<svg style="left:812.0px;top:82.0px" width="16" height="16" viewBox="0 0 16 16"><path d="M0.5 1.5h5M3 1.5v13" stroke="#6e6e6e" stroke-width="1.2" fill="none"/><rect x="7.4" y="8.4" width="6.4" height="5.4" rx="1" fill="#6e6e6e"/><path d="M8.8 8.4V6.6a1.8 1.8 0 0 1 3.6 0v1.8" stroke="#6e6e6e" stroke-width="1.2" fill="none"/></svg>
<div class="abs" style="left:842px;top:81px;width:51px;height:19px;background:#424242"></div>
<div class="abs" style="left:880px;top:81px;width:13px;height:19px;background:#3c3c3c"></div>
<span class="t" style="left:845.0px;top:81.0px;font-size:11px;line-height:20px;color:#d8d8d8;letter-spacing:-0.40px;">1x</span>
<svg style="left:883.0px;top:88.0px" width="6" height="3" viewBox="0 0 6 3"><path d="M0 0h6l-3 3z" fill="#f0f0f0"/></svg>
<div class="abs" style="left:1449px;top:77px;width:73px;height:23px;border-radius:3px;background:linear-gradient(#363636,#2c2c2c);border:1px solid #2a2a2a;border-top-color:#4a4a4a;box-shadow:0 1px 2px #222"></div>
<span class="t" style="left:1461.5px;top:78.0px;font-size:12px;line-height:20px;color:#d2d2d2;letter-spacing:0.37px;">Editor</span>
<svg style="left:1500.0px;top:83.0px" width="9" height="9" viewBox="0 0 9 9"><path d="M4.5 0l4.5 4.5h-3v4.5h-3v-4.5h-3z" fill="#e4e4e4"/></svg>
<!--TIMELINE_E-->
</div>

<!-- ======= STATUS BAR ======= -->
<div id="status" class="abs" style="left:0;top:1112px;width:1920px;height:26px">
<!--STATUS_S-->
<span class="t" style="left:2.0px;top:6.0px;font-size:11px;line-height:20px;color:#2aa5e6;letter-spacing:-0.09px;">Status: 3D Data Paused</span>
<div class="abs" style="left:315px;top:9px;width:1px;height:15px;background:#7c7c7c"></div>
<span class="t" style="left:321.1px;top:6.0px;font-size:11px;line-height:20px;color:#8c8c8c;letter-spacing:0.05px;">Cameras: (Inactive)</span>
<div class="abs" style="left:481px;top:9px;width:1px;height:15px;background:#7c7c7c"></div>
<span class="t" style="left:486.4px;top:6.0px;font-size:11px;line-height:20px;color:#8c8c8c;letter-spacing:0.06px;">Point Cloud: (Inactive)</span>
<div class="abs" style="left:745px;top:9px;width:1px;height:15px;background:#7c7c7c"></div>
<span class="t" style="left:751.4px;top:6.0px;font-size:11px;line-height:20px;color:#8c8c8c;letter-spacing:0.06px;">Skeleton: (Inactive)</span>
<div class="abs" style="left:969px;top:9px;width:1px;height:15px;background:#7c7c7c"></div>
<span class="t" style="left:974.9px;top:6.0px;font-size:11px;line-height:20px;color:#e0e0e0;letter-spacing:-0.01px;">Data: 0.0 KB/s</span>
<div class="abs" style="left:1073px;top:9px;width:1px;height:15px;background:#7c7c7c"></div>
<span class="t" style="left:1078.8px;top:6.0px;font-size:11px;line-height:20px;color:#e0e0e0;letter-spacing:0.02px;">Latency: 0.0 ms</span>
<div class="abs" style="left:1177px;top:9px;width:1px;height:15px;background:#7c7c7c"></div>
<span class="t" style="left:1182.8px;top:6.0px;font-size:11px;line-height:20px;color:#e0e0e0;letter-spacing:-0.02px;">Display: 60 fps</span>
<div class="abs" style="left:1742px;top:9px;width:1px;height:15px;background:#a8a8a8"></div>
<span class="t" style="left:1748.0px;top:4.7px;font-size:14px;line-height:20px;color:#303030;letter-spacing:0.65px;font-weight:bold;">CAM</span>
<div class="abs" style="left:1786px;top:9px;width:1px;height:15px;background:#a8a8a8"></div>
<span class="t" style="left:1799.6px;top:4.7px;font-size:14px;line-height:20px;color:#303030;letter-spacing:0.65px;font-weight:bold;">2D</span>
<div class="abs" style="left:1830px;top:9px;width:1px;height:15px;background:#a8a8a8"></div>
<span class="t" style="left:1842.6px;top:4.7px;font-size:14px;line-height:20px;color:#303030;letter-spacing:0.75px;font-weight:bold;">3D</span>
<div class="abs" style="left:1874px;top:9px;width:1px;height:15px;background:#a8a8a8"></div>
<span class="t" style="left:1884.0px;top:4.7px;font-size:14px;line-height:20px;color:#303030;letter-spacing:-0.10px;font-weight:bold;">NET</span>
<div class="abs" style="left:0;top:25px;width:1920px;height:1px;background:linear-gradient(90deg,#7c5c32,#97794a 50%,#c9b98c)"></div>
<div class="abs" style="left:378px;top:0;width:1538px;height:1px;background:#5c5c5c"></div>
<!--STATUS_E-->
</div>

<div id="bstrip" class="abs" style="left:1916px;top:1083px;width:4px;height:40px;background:#000"></div>
</body>
</html>
